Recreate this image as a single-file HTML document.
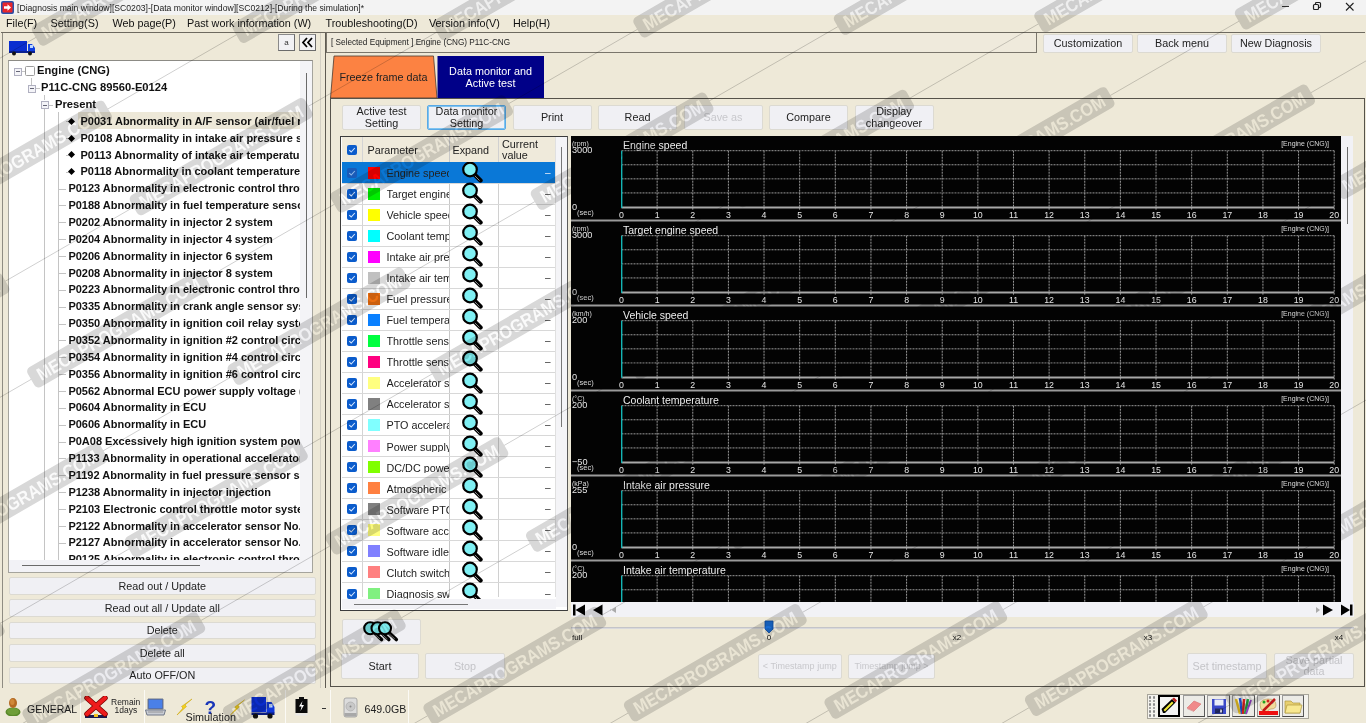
<!DOCTYPE html><html><head><meta charset="utf-8"><style>
html,body{margin:0;padding:0;}
body{width:1366px;height:723px;overflow:hidden;position:relative;background:#eee9d8;font-family:"Liberation Sans", sans-serif;}
.t{position:absolute;white-space:nowrap;}
</style></head><body>
<div style="position:absolute;left:0px;top:0px;width:1366px;height:15px;box-sizing:border-box;background:#f3f3f3"></div>
<svg style="position:absolute;left:1px;top:1px" width="13" height="13" viewBox="0 0 13 13"><rect x="0" y="0" width="13" height="13" rx="2" fill="#2a4fa8"/><rect x="1.5" y="1.5" width="10" height="10" rx="1" fill="#e8262c"/><path d="M3 5.2h3.5V3.3l3.5 3.2-3.5 3.2V7.8H3z" fill="#fff"/></svg>
<div class="t" style="left:17px;top:3.68px;font-size:8.65px;line-height:8.65px;color:#222;font-weight:normal;">[Diagnosis main window][SC0203]-[Data monitor window][SC0212]-[During the simulation]*</div>
<div style="position:absolute;left:1281.5px;top:5.5px;width:7px;height:1px;box-sizing:border-box;background:#333"></div>
<svg style="position:absolute;left:1312px;top:1px" width="10" height="10" viewBox="0 0 10 10"><rect x="1.5" y="3.5" width="5" height="5" rx="1" fill="none" stroke="#222" stroke-width="1.2"/><path d="M3.5 3.5V2.5a1 1 0 0 1 1-1h3a1 1 0 0 1 1 1v3a1 1 0 0 1-1 1h-1" fill="none" stroke="#222" stroke-width="1.2"/></svg>
<svg style="position:absolute;left:1345px;top:1.5px" width="10" height="10" viewBox="0 0 10 10"><path d="M1 1L8.5 8.5M8.5 1L1 8.5" stroke="#222" stroke-width="1.1"/></svg>
<div class="t" style="left:6px;top:18.36px;font-size:10.8px;line-height:10.8px;color:#111;font-weight:normal;">File(F)</div>
<div class="t" style="left:50.5px;top:18.36px;font-size:10.8px;line-height:10.8px;color:#111;font-weight:normal;">Setting(S)</div>
<div class="t" style="left:112.5px;top:18.36px;font-size:10.8px;line-height:10.8px;color:#111;font-weight:normal;">Web page(P)</div>
<div class="t" style="left:187px;top:18.36px;font-size:10.8px;line-height:10.8px;color:#111;font-weight:normal;">Past work information (W)</div>
<div class="t" style="left:325.5px;top:18.36px;font-size:10.8px;line-height:10.8px;color:#111;font-weight:normal;">Troubleshooting(D)</div>
<div class="t" style="left:429px;top:18.36px;font-size:10.8px;line-height:10.8px;color:#111;font-weight:normal;">Version info(V)</div>
<div class="t" style="left:513px;top:18.36px;font-size:10.8px;line-height:10.8px;color:#111;font-weight:normal;">Help(H)</div>
<div style="position:absolute;left:1px;top:32px;width:1364px;height:1px;box-sizing:border-box;background:#6e6a60"></div>
<div style="position:absolute;left:320px;top:33px;width:1px;height:655px;box-sizing:border-box;background:#d4d0c4"></div>
<div style="position:absolute;left:1.5px;top:33px;width:1px;height:655px;box-sizing:border-box;background:#8f8c82"></div>
<svg style="position:absolute;left:9px;top:40px" width="27" height="16" viewBox="0 0 27 16"><rect x="0" y="1" width="18" height="11" fill="#0a2ed0"/><path d="M19 4h4l3 4v4h-7z" fill="#1040e0"/><rect x="21" y="5" width="3" height="3" fill="#bfd8ff"/><rect x="0" y="11" width="26" height="2" fill="#0a2090"/><circle cx="5" cy="13.5" r="2" fill="#111"/><circle cx="21" cy="13.5" r="2" fill="#111"/></svg>
<div style="position:absolute;left:278px;top:34px;width:17px;height:17px;box-sizing:border-box;background:#f2f2f4;border:1px solid #6b6b6b;border-top-color:#8a8a8a;border-left-color:#8a8a8a"></div>
<div class="t" style="left:278.0px;width:17px;text-align:center;top:39.23px;font-size:8px;line-height:8px;color:#333;font-weight:normal;">a</div>
<div style="position:absolute;left:299px;top:34px;width:17px;height:17px;box-sizing:border-box;background:#f2f2f4;border:1px solid #6b6b6b;border-top-color:#8a8a8a;border-left-color:#8a8a8a"></div>
<svg style="position:absolute;left:301px;top:36px" width="13" height="13" viewBox="0 0 13 13"><path d="M6 2L2 6.5L6 11M11 2L7 6.5L11 11" fill="none" stroke="#000" stroke-width="1.8"/></svg>
<div style="position:absolute;left:8px;top:60px;width:305px;height:513px;box-sizing:border-box;background:#fff;border:1px solid #a5a49d;border-top-color:#8c8b85"></div>
<div style="position:absolute;left:300px;top:61px;width:12px;height:511px;box-sizing:border-box;background:#f4f4f7"></div>
<div style="position:absolute;left:305.5px;top:73px;width:1.2px;height:225px;box-sizing:border-box;background:#6a6a6a"></div>
<div style="position:absolute;left:9px;top:560px;width:291px;height:12px;box-sizing:border-box;background:#f2f2f6"></div>
<div style="position:absolute;left:22px;top:564.8px;width:178px;height:1.2px;box-sizing:border-box;background:#6a6a6a"></div>
<div style="position:absolute;left:9px;top:61px;width:291px;height:499px;overflow:hidden">
<div style="position:absolute;left:69px;top:51px;width:230px;height:17px;box-sizing:border-box;background:#ede8d8"></div>
<div style="position:absolute;left:22px;top:17px;width:1px;height:7px;box-sizing:border-box;background:#c4c4c4;width:1px"></div>
<div style="position:absolute;left:35px;top:34px;width:1px;height:5px;box-sizing:border-box;background:#c4c4c4;width:1px"></div>
<div style="position:absolute;left:35px;top:48px;width:1px;height:470px;box-sizing:border-box;background:#c4c4c4;width:1px"></div>
<div style="position:absolute;left:49px;top:51px;width:1px;height:470px;box-sizing:border-box;background:#c4c4c4;width:1px"></div>
<div style="position:absolute;left:12px;top:10px;width:4px;height:1px;box-sizing:border-box;background:#c4c4c4;height:1px"></div>
<div style="position:absolute;left:26px;top:27px;width:5px;height:1px;box-sizing:border-box;background:#c4c4c4;height:1px"></div>
<div style="position:absolute;left:39px;top:43.5px;width:5px;height:1px;box-sizing:border-box;background:#c4c4c4;height:1px"></div>
<div style="position:absolute;left:5px;top:6.5px;width:8px;height:8px;box-sizing:border-box;background:#f4f4f8;border:1px solid #b0b0c0"></div>
<div style="position:absolute;left:7px;top:10px;width:4px;height:1px;box-sizing:border-box;background:#667"></div>
<div style="position:absolute;left:16px;top:5px;width:10px;height:10px;box-sizing:border-box;background:#fff;border:1px solid #9c9c9c;border-radius:1.5px"></div>
<div class="t" style="left:28px;top:4.12px;font-size:11.2px;line-height:11.2px;color:#111;font-weight:bold;">Engine (CNG)</div>
<div style="position:absolute;left:19px;top:23.5px;width:8px;height:8px;box-sizing:border-box;background:#f4f4f8;border:1px solid #b0b0c0"></div>
<div style="position:absolute;left:21px;top:27px;width:4px;height:1px;box-sizing:border-box;background:#667"></div>
<div class="t" style="left:32px;top:20.98px;font-size:11.2px;line-height:11.2px;color:#111;font-weight:bold;">P11C-CNG 89560-E0124</div>
<div style="position:absolute;left:32px;top:40.2px;width:8px;height:8px;box-sizing:border-box;background:#f4f4f8;border:1px solid #b0b0c0"></div>
<div style="position:absolute;left:34px;top:43.7px;width:4px;height:1px;box-sizing:border-box;background:#667"></div>
<div class="t" style="left:46px;top:37.84px;font-size:11.2px;line-height:11.2px;color:#111;font-weight:bold;">Present</div>
<div style="position:absolute;left:57px;top:60.17999999999999px;width:3px;height:1px;box-sizing:border-box;background:#c4c4c4;height:1px"></div>
<svg style="position:absolute;left:59px;top:56.68px" width="7" height="7" viewBox="0 0 7 7"><path d="M3.5 0L7 3.5L3.5 7L0 3.5z" fill="#000"/></svg>
<div class="t" style="left:71.5px;top:54.87px;font-size:11px;line-height:11px;color:#111;font-weight:bold;">P0031 Abnormality in A/F sensor (air/fuel ratio)</div>
<div style="position:absolute;left:57px;top:77.03999999999999px;width:3px;height:1px;box-sizing:border-box;background:#c4c4c4;height:1px"></div>
<svg style="position:absolute;left:59px;top:73.54px" width="7" height="7" viewBox="0 0 7 7"><path d="M3.5 0L7 3.5L3.5 7L0 3.5z" fill="#000"/></svg>
<div class="t" style="left:71.5px;top:71.73px;font-size:11px;line-height:11px;color:#111;font-weight:bold;">P0108 Abnormality in intake air pressure sensor</div>
<div style="position:absolute;left:57px;top:93.89999999999998px;width:3px;height:1px;box-sizing:border-box;background:#c4c4c4;height:1px"></div>
<svg style="position:absolute;left:59px;top:90.40px" width="7" height="7" viewBox="0 0 7 7"><path d="M3.5 0L7 3.5L3.5 7L0 3.5z" fill="#000"/></svg>
<div class="t" style="left:71.5px;top:88.59px;font-size:11px;line-height:11px;color:#111;font-weight:bold;">P0113 Abnormality of intake air temperature</div>
<div style="position:absolute;left:57px;top:110.75999999999999px;width:3px;height:1px;box-sizing:border-box;background:#c4c4c4;height:1px"></div>
<svg style="position:absolute;left:59px;top:107.26px" width="7" height="7" viewBox="0 0 7 7"><path d="M3.5 0L7 3.5L3.5 7L0 3.5z" fill="#000"/></svg>
<div class="t" style="left:71.5px;top:105.45px;font-size:11px;line-height:11px;color:#111;font-weight:bold;">P0118 Abnormality in coolant temperature</div>
<div style="position:absolute;left:50px;top:127.62px;width:7px;height:1px;box-sizing:border-box;background:#c4c4c4;height:1px"></div>
<div class="t" style="left:59.400000000000006px;top:122.31px;font-size:11px;line-height:11px;color:#111;font-weight:bold;">P0123 Abnormality in electronic control throttle</div>
<div style="position:absolute;left:50px;top:144.48px;width:7px;height:1px;box-sizing:border-box;background:#c4c4c4;height:1px"></div>
<div class="t" style="left:59.400000000000006px;top:139.17px;font-size:11px;line-height:11px;color:#111;font-weight:bold;">P0188 Abnormality in fuel temperature sensor</div>
<div style="position:absolute;left:50px;top:161.34px;width:7px;height:1px;box-sizing:border-box;background:#c4c4c4;height:1px"></div>
<div class="t" style="left:59.400000000000006px;top:156.03px;font-size:11px;line-height:11px;color:#111;font-weight:bold;">P0202 Abnormality in injector 2 system</div>
<div style="position:absolute;left:50px;top:178.2px;width:7px;height:1px;box-sizing:border-box;background:#c4c4c4;height:1px"></div>
<div class="t" style="left:59.400000000000006px;top:172.89px;font-size:11px;line-height:11px;color:#111;font-weight:bold;">P0204 Abnormality in injector 4 system</div>
<div style="position:absolute;left:50px;top:195.05999999999995px;width:7px;height:1px;box-sizing:border-box;background:#c4c4c4;height:1px"></div>
<div class="t" style="left:59.400000000000006px;top:189.75px;font-size:11px;line-height:11px;color:#111;font-weight:bold;">P0206 Abnormality in injector 6 system</div>
<div style="position:absolute;left:50px;top:211.91999999999996px;width:7px;height:1px;box-sizing:border-box;background:#c4c4c4;height:1px"></div>
<div class="t" style="left:59.400000000000006px;top:206.61px;font-size:11px;line-height:11px;color:#111;font-weight:bold;">P0208 Abnormality in injector 8 system</div>
<div style="position:absolute;left:50px;top:228.77999999999997px;width:7px;height:1px;box-sizing:border-box;background:#c4c4c4;height:1px"></div>
<div class="t" style="left:59.400000000000006px;top:223.47px;font-size:11px;line-height:11px;color:#111;font-weight:bold;">P0223 Abnormality in electronic control throttle</div>
<div style="position:absolute;left:50px;top:245.64px;width:7px;height:1px;box-sizing:border-box;background:#c4c4c4;height:1px"></div>
<div class="t" style="left:59.400000000000006px;top:240.33px;font-size:11px;line-height:11px;color:#111;font-weight:bold;">P0335 Abnormality in crank angle sensor system</div>
<div style="position:absolute;left:50px;top:262.5px;width:7px;height:1px;box-sizing:border-box;background:#c4c4c4;height:1px"></div>
<div class="t" style="left:59.400000000000006px;top:257.19px;font-size:11px;line-height:11px;color:#111;font-weight:bold;">P0350 Abnormality in ignition coil relay system</div>
<div style="position:absolute;left:50px;top:279.36px;width:7px;height:1px;box-sizing:border-box;background:#c4c4c4;height:1px"></div>
<div class="t" style="left:59.400000000000006px;top:274.05px;font-size:11px;line-height:11px;color:#111;font-weight:bold;">P0352 Abnormality in ignition #2 control circuit</div>
<div style="position:absolute;left:50px;top:296.22px;width:7px;height:1px;box-sizing:border-box;background:#c4c4c4;height:1px"></div>
<div class="t" style="left:59.400000000000006px;top:290.91px;font-size:11px;line-height:11px;color:#111;font-weight:bold;">P0354 Abnormality in ignition #4 control circuit</div>
<div style="position:absolute;left:50px;top:313.08000000000004px;width:7px;height:1px;box-sizing:border-box;background:#c4c4c4;height:1px"></div>
<div class="t" style="left:59.400000000000006px;top:307.77px;font-size:11px;line-height:11px;color:#111;font-weight:bold;">P0356 Abnormality in ignition #6 control circuit</div>
<div style="position:absolute;left:50px;top:329.93999999999994px;width:7px;height:1px;box-sizing:border-box;background:#c4c4c4;height:1px"></div>
<div class="t" style="left:59.400000000000006px;top:324.63px;font-size:11px;line-height:11px;color:#111;font-weight:bold;">P0562 Abnormal ECU power supply voltage (low)</div>
<div style="position:absolute;left:50px;top:346.79999999999995px;width:7px;height:1px;box-sizing:border-box;background:#c4c4c4;height:1px"></div>
<div class="t" style="left:59.400000000000006px;top:341.49px;font-size:11px;line-height:11px;color:#111;font-weight:bold;">P0604 Abnormality in ECU</div>
<div style="position:absolute;left:50px;top:363.65999999999997px;width:7px;height:1px;box-sizing:border-box;background:#c4c4c4;height:1px"></div>
<div class="t" style="left:59.400000000000006px;top:358.35px;font-size:11px;line-height:11px;color:#111;font-weight:bold;">P0606 Abnormality in ECU</div>
<div style="position:absolute;left:50px;top:380.52px;width:7px;height:1px;box-sizing:border-box;background:#c4c4c4;height:1px"></div>
<div class="t" style="left:59.400000000000006px;top:375.21px;font-size:11px;line-height:11px;color:#111;font-weight:bold;">P0A08 Excessively high ignition system power</div>
<div style="position:absolute;left:50px;top:397.38px;width:7px;height:1px;box-sizing:border-box;background:#c4c4c4;height:1px"></div>
<div class="t" style="left:59.400000000000006px;top:392.07px;font-size:11px;line-height:11px;color:#111;font-weight:bold;">P1133 Abnormality in operational accelerator</div>
<div style="position:absolute;left:50px;top:414.24px;width:7px;height:1px;box-sizing:border-box;background:#c4c4c4;height:1px"></div>
<div class="t" style="left:59.400000000000006px;top:408.93px;font-size:11px;line-height:11px;color:#111;font-weight:bold;">P1192 Abnormality in fuel pressure sensor system</div>
<div style="position:absolute;left:50px;top:431.1px;width:7px;height:1px;box-sizing:border-box;background:#c4c4c4;height:1px"></div>
<div class="t" style="left:59.400000000000006px;top:425.79px;font-size:11px;line-height:11px;color:#111;font-weight:bold;">P1238 Abnormality in injector injection</div>
<div style="position:absolute;left:50px;top:447.96000000000004px;width:7px;height:1px;box-sizing:border-box;background:#c4c4c4;height:1px"></div>
<div class="t" style="left:59.400000000000006px;top:442.65px;font-size:11px;line-height:11px;color:#111;font-weight:bold;">P2103 Electronic control throttle motor system</div>
<div style="position:absolute;left:50px;top:464.81999999999994px;width:7px;height:1px;box-sizing:border-box;background:#c4c4c4;height:1px"></div>
<div class="t" style="left:59.400000000000006px;top:459.51px;font-size:11px;line-height:11px;color:#111;font-weight:bold;">P2122 Abnormality in accelerator sensor No.1</div>
<div style="position:absolute;left:50px;top:481.67999999999995px;width:7px;height:1px;box-sizing:border-box;background:#c4c4c4;height:1px"></div>
<div class="t" style="left:59.400000000000006px;top:476.37px;font-size:11px;line-height:11px;color:#111;font-weight:bold;">P2127 Abnormality in accelerator sensor No.2</div>
<div style="position:absolute;left:50px;top:498.53999999999996px;width:7px;height:1px;box-sizing:border-box;background:#c4c4c4;height:1px"></div>
<div class="t" style="left:59.400000000000006px;top:493.23px;font-size:11px;line-height:11px;color:#111;font-weight:bold;">P0125 Abnormality in electronic control throttle</div>
</div>
<div style="position:absolute;left:9px;top:560px;width:291px;height:12px;box-sizing:border-box;background:#f2f2f6"></div>
<div style="position:absolute;left:22px;top:564.8px;width:178px;height:1.2px;box-sizing:border-box;background:#6a6a6a"></div>
<div style="position:absolute;left:300px;top:61px;width:12px;height:511px;box-sizing:border-box;background:#f4f4f7"></div>
<div style="position:absolute;left:305.5px;top:73px;width:1.2px;height:225px;box-sizing:border-box;background:#6a6a6a"></div>
<div style="position:absolute;left:8.5px;top:577.0px;width:307.5px;height:17.5px;box-sizing:border-box;background:#f0f0f4;border:1px solid #dcdad2;border-radius:2px;"></div>
<div class="t" style="left:-11.5px;width:347.5px;text-align:center;top:580.55px;font-size:10.8px;line-height:10.8px;color:#222;font-weight:normal;">Read out / Update</div>
<div style="position:absolute;left:8.5px;top:599.45px;width:307.5px;height:17.5px;box-sizing:border-box;background:#f0f0f4;border:1px solid #dcdad2;border-radius:2px;"></div>
<div class="t" style="left:-11.5px;width:347.5px;text-align:center;top:603.00px;font-size:10.8px;line-height:10.8px;color:#222;font-weight:normal;">Read out all / Update all</div>
<div style="position:absolute;left:8.5px;top:621.9px;width:307.5px;height:17.5px;box-sizing:border-box;background:#f0f0f4;border:1px solid #dcdad2;border-radius:2px;"></div>
<div class="t" style="left:-11.5px;width:347.5px;text-align:center;top:625.45px;font-size:10.8px;line-height:10.8px;color:#222;font-weight:normal;">Delete</div>
<div style="position:absolute;left:8.5px;top:644.35px;width:307.5px;height:17.5px;box-sizing:border-box;background:#f0f0f4;border:1px solid #dcdad2;border-radius:2px;"></div>
<div class="t" style="left:-11.5px;width:347.5px;text-align:center;top:647.90px;font-size:10.8px;line-height:10.8px;color:#222;font-weight:normal;">Delete all</div>
<div style="position:absolute;left:8.5px;top:666.8px;width:307.5px;height:17.5px;box-sizing:border-box;background:#f0f0f4;border:1px solid #dcdad2;border-radius:2px;"></div>
<div class="t" style="left:-11.5px;width:347.5px;text-align:center;top:670.35px;font-size:10.8px;line-height:10.8px;color:#222;font-weight:normal;">Auto OFF/ON</div>
<div style="position:absolute;left:324.5px;top:33px;width:1px;height:655px;box-sizing:border-box;background:#5f5b52"></div>
<div style="position:absolute;left:326px;top:33px;width:711px;height:19.5px;box-sizing:border-box;border:1px solid #7a766c;border-top:none;border-left-color:#7a766c;background:#efeadc"></div>
<div class="t" style="left:331px;top:38.56px;font-size:8.2px;line-height:8.2px;color:#222;font-weight:normal;">[ Selected Equipment ] Engine (CNG) P11C-CNG</div>
<div style="position:absolute;left:1043px;top:33.5px;width:90px;height:19px;box-sizing:border-box;background:#f0f0f4;border:1px solid #dcdad2;border-radius:2px;"></div>
<div class="t" style="left:1023.0px;width:130px;text-align:center;top:37.80px;font-size:10.8px;line-height:10.8px;color:#222;font-weight:normal;">Customization</div>
<div style="position:absolute;left:1137px;top:33.5px;width:90px;height:19px;box-sizing:border-box;background:#f0f0f4;border:1px solid #dcdad2;border-radius:2px;"></div>
<div class="t" style="left:1117.0px;width:130px;text-align:center;top:37.80px;font-size:10.8px;line-height:10.8px;color:#222;font-weight:normal;">Back menu</div>
<div style="position:absolute;left:1231px;top:33.5px;width:90px;height:19px;box-sizing:border-box;background:#f0f0f4;border:1px solid #dcdad2;border-radius:2px;"></div>
<div class="t" style="left:1211.0px;width:130px;text-align:center;top:37.80px;font-size:10.8px;line-height:10.8px;color:#222;font-weight:normal;">New Diagnosis</div>
<svg style="position:absolute;left:330px;top:55px" width="215" height="44" viewBox="0 0 215 44"><path d="M4 1H103.5L107 43H0.5z" fill="#fc8242" stroke="#4a3a30" stroke-width="0.8"/><rect x="107.5" y="1" width="106.5" height="42" fill="#000088"/></svg>
<div class="t" style="left:323.5px;width:120px;text-align:center;top:71.66px;font-size:10.8px;line-height:10.8px;color:#222;font-weight:normal;">Freeze frame data</div>
<div class="t" style="left:430.5px;width:120px;text-align:center;top:66.16px;font-size:10.8px;line-height:10.8px;color:#fff;font-weight:normal;">Data monitor and</div>
<div class="t" style="left:430.5px;width:120px;text-align:center;top:78.36px;font-size:10.8px;line-height:10.8px;color:#fff;font-weight:normal;">Active test</div>
<div style="position:absolute;left:330px;top:98px;width:1034.5px;height:588.5px;box-sizing:border-box;border:1.5px solid #55524a;border-right-width:1.5px"></div>
<div style="position:absolute;left:342px;top:104.5px;width:79px;height:25.5px;box-sizing:border-box;background:#f0f0f4;border:1px solid #dcdad2;border-radius:2px;"></div>
<div class="t" style="left:322.0px;width:119px;text-align:center;top:106.38px;font-size:10.8px;line-height:10.8px;color:#222;font-weight:normal;">Active test</div>
<div class="t" style="left:322.0px;width:119px;text-align:center;top:117.72px;font-size:10.8px;line-height:10.8px;color:#222;font-weight:normal;">Setting</div>
<div style="position:absolute;left:427px;top:104.5px;width:79px;height:25.5px;box-sizing:border-box;background:#f0f0f4;border:1px solid #5aa9e6;border-radius:2px;box-shadow:inset 0 0 0 1px #7fc4f0;"></div>
<div class="t" style="left:407.0px;width:119px;text-align:center;top:106.38px;font-size:10.8px;line-height:10.8px;color:#222;font-weight:normal;">Data monitor</div>
<div class="t" style="left:407.0px;width:119px;text-align:center;top:117.72px;font-size:10.8px;line-height:10.8px;color:#222;font-weight:normal;">Setting</div>
<div style="position:absolute;left:512.5px;top:104.5px;width:79px;height:25.5px;box-sizing:border-box;background:#f0f0f4;border:1px solid #dcdad2;border-radius:2px;"></div>
<div class="t" style="left:492.5px;width:119px;text-align:center;top:112.05px;font-size:10.8px;line-height:10.8px;color:#222;font-weight:normal;">Print</div>
<div style="position:absolute;left:598px;top:104.5px;width:79px;height:25.5px;box-sizing:border-box;background:#f0f0f4;border:1px solid #dcdad2;border-radius:2px;"></div>
<div class="t" style="left:578.0px;width:119px;text-align:center;top:112.05px;font-size:10.8px;line-height:10.8px;color:#222;font-weight:normal;">Read</div>
<div style="position:absolute;left:683.5px;top:104.5px;width:79px;height:25.5px;box-sizing:border-box;background:#f0f0f4;border:1px solid #dcdad2;border-radius:2px;"></div>
<div class="t" style="left:663.5px;width:119px;text-align:center;top:112.05px;font-size:10.8px;line-height:10.8px;color:#c8c8cc;font-weight:normal;">Save as</div>
<div style="position:absolute;left:769px;top:104.5px;width:79px;height:25.5px;box-sizing:border-box;background:#f0f0f4;border:1px solid #dcdad2;border-radius:2px;"></div>
<div class="t" style="left:749.0px;width:119px;text-align:center;top:112.05px;font-size:10.8px;line-height:10.8px;color:#222;font-weight:normal;">Compare</div>
<div style="position:absolute;left:854.5px;top:104.5px;width:79px;height:25.5px;box-sizing:border-box;background:#f0f0f4;border:1px solid #dcdad2;border-radius:2px;"></div>
<div class="t" style="left:834.5px;width:119px;text-align:center;top:106.38px;font-size:10.8px;line-height:10.8px;color:#222;font-weight:normal;">Display</div>
<div class="t" style="left:834.5px;width:119px;text-align:center;top:117.72px;font-size:10.8px;line-height:10.8px;color:#222;font-weight:normal;">changeover</div>
<div style="position:absolute;left:340px;top:135.5px;width:227.5px;height:475px;box-sizing:border-box;background:#fff;border:1.5px solid #3c3c3c;border-right:1px solid #5a5a5a"></div>
<div style="position:absolute;left:341.5px;top:137px;width:213px;height:25px;box-sizing:border-box;background:#efeadb"></div>
<div style="position:absolute;left:362px;top:137px;width:1px;height:460px;box-sizing:border-box;background:#d4d4d4"></div>
<div style="position:absolute;left:448.5px;top:137px;width:1px;height:460px;box-sizing:border-box;background:#c8c8c8"></div>
<div style="position:absolute;left:497.5px;top:137px;width:1px;height:460px;box-sizing:border-box;background:#d0d0d0"></div>
<div style="position:absolute;left:554.5px;top:137px;width:1px;height:460px;box-sizing:border-box;background:#e0e0e0"></div>
<svg style="position:absolute;left:347px;top:144.5px" width="10" height="10" viewBox="0 0 10 10"><rect x="0" y="0" width="10" height="10" rx="2" fill="#0b5ccc"/><path d="M2.3 5.2L4.2 7L7.8 3" fill="none" stroke="#cfe3ff" stroke-width="1.1"/></svg>
<div class="t" style="left:367.5px;top:144.86px;font-size:10.8px;line-height:10.8px;color:#222;font-weight:normal;">Parameter</div>
<div class="t" style="left:452.5px;top:144.86px;font-size:10.8px;line-height:10.8px;color:#222;font-weight:normal;">Expand</div>
<div class="t" style="left:502px;top:139.36px;font-size:10.8px;line-height:10.8px;color:#222;font-weight:normal;">Current</div>
<div class="t" style="left:502px;top:150.36px;font-size:10.8px;line-height:10.8px;color:#222;font-weight:normal;">value</div>
<div style="position:absolute;left:341.5px;top:162px;width:213px;height:437px;overflow:hidden">
<div style="position:absolute;left:0.0px;top:0.0px;width:213px;height:21px;box-sizing:border-box;background:#0a78d7"></div>
<div style="position:absolute;left:0.0px;top:20.5px;width:213px;height:1px;box-sizing:border-box;background:#d8d8d8"></div>
<svg style="position:absolute;left:5.5px;top:5.50px" width="10" height="10" viewBox="0 0 10 10"><rect x="0" y="0" width="10" height="10" rx="2" fill="#1a5bb8"/><path d="M2.3 5.2L4.2 7L7.8 3" fill="none" stroke="#8fb8e8" stroke-width="1.1"/></svg>
<div style="position:absolute;left:26.5px;top:4.5px;width:12px;height:12px;box-sizing:border-box;background:#ff0000"></div>
<div class="t" style="left:45.0px;top:5.86px;width:62.0px;overflow:hidden;font-size:10.8px;line-height:10.8px;color:#222">Engine speed</div>
<svg style="position:absolute;left:119.5px;top:-1.00px" width="24" height="22" viewBox="0 0 24 22"><path d="M13 13L19.5 19.5" stroke="#000" stroke-width="4.4" stroke-linecap="round"/><path d="M13.5 14.5L18.5 19.5" stroke="#9a9a9a" stroke-width="0.9"/><circle cx="9" cy="8.5" r="6.8" fill="#7ff0f4" stroke="#000" stroke-width="2.2"/></svg>
<div class="t" style="left:203.5px;top:5.54px;font-size:10px;line-height:10px;color:#e8eef8;font-weight:normal;">–</div>
<div style="position:absolute;left:0.0px;top:41.55000000000001px;width:213px;height:1px;box-sizing:border-box;background:#d8d8d8"></div>
<svg style="position:absolute;left:5.5px;top:26.55px" width="10" height="10" viewBox="0 0 10 10"><rect x="0" y="0" width="10" height="10" rx="2" fill="#0b5ccc"/><path d="M2.3 5.2L4.2 7L7.8 3" fill="none" stroke="#d8e8ff" stroke-width="1.1"/></svg>
<div style="position:absolute;left:26.5px;top:25.55000000000001px;width:12px;height:12px;box-sizing:border-box;background:#00ee00"></div>
<div class="t" style="left:45.0px;top:26.91px;width:62.0px;overflow:hidden;font-size:10.8px;line-height:10.8px;color:#222">Target engine speed</div>
<svg style="position:absolute;left:119.5px;top:20.05px" width="24" height="22" viewBox="0 0 24 22"><path d="M13 13L19.5 19.5" stroke="#000" stroke-width="4.4" stroke-linecap="round"/><path d="M13.5 14.5L18.5 19.5" stroke="#9a9a9a" stroke-width="0.9"/><circle cx="9" cy="8.5" r="6.8" fill="#7ff0f4" stroke="#000" stroke-width="2.2"/></svg>
<div class="t" style="left:203.5px;top:26.59px;font-size:10px;line-height:10px;color:#333;font-weight:normal;">–</div>
<div style="position:absolute;left:0.0px;top:62.599999999999994px;width:213px;height:1px;box-sizing:border-box;background:#d8d8d8"></div>
<svg style="position:absolute;left:5.5px;top:47.60px" width="10" height="10" viewBox="0 0 10 10"><rect x="0" y="0" width="10" height="10" rx="2" fill="#0b5ccc"/><path d="M2.3 5.2L4.2 7L7.8 3" fill="none" stroke="#d8e8ff" stroke-width="1.1"/></svg>
<div style="position:absolute;left:26.5px;top:46.599999999999994px;width:12px;height:12px;box-sizing:border-box;background:#ffff00"></div>
<div class="t" style="left:45.0px;top:47.96px;width:62.0px;overflow:hidden;font-size:10.8px;line-height:10.8px;color:#222">Vehicle speed</div>
<svg style="position:absolute;left:119.5px;top:41.10px" width="24" height="22" viewBox="0 0 24 22"><path d="M13 13L19.5 19.5" stroke="#000" stroke-width="4.4" stroke-linecap="round"/><path d="M13.5 14.5L18.5 19.5" stroke="#9a9a9a" stroke-width="0.9"/><circle cx="9" cy="8.5" r="6.8" fill="#7ff0f4" stroke="#000" stroke-width="2.2"/></svg>
<div class="t" style="left:203.5px;top:47.63px;font-size:10px;line-height:10px;color:#333;font-weight:normal;">–</div>
<div style="position:absolute;left:0.0px;top:83.65px;width:213px;height:1px;box-sizing:border-box;background:#d8d8d8"></div>
<svg style="position:absolute;left:5.5px;top:68.65px" width="10" height="10" viewBox="0 0 10 10"><rect x="0" y="0" width="10" height="10" rx="2" fill="#0b5ccc"/><path d="M2.3 5.2L4.2 7L7.8 3" fill="none" stroke="#d8e8ff" stroke-width="1.1"/></svg>
<div style="position:absolute;left:26.5px;top:67.65px;width:12px;height:12px;box-sizing:border-box;background:#00ffff"></div>
<div class="t" style="left:45.0px;top:69.01px;width:62.0px;overflow:hidden;font-size:10.8px;line-height:10.8px;color:#222">Coolant temperature</div>
<svg style="position:absolute;left:119.5px;top:62.15px" width="24" height="22" viewBox="0 0 24 22"><path d="M13 13L19.5 19.5" stroke="#000" stroke-width="4.4" stroke-linecap="round"/><path d="M13.5 14.5L18.5 19.5" stroke="#9a9a9a" stroke-width="0.9"/><circle cx="9" cy="8.5" r="6.8" fill="#7ff0f4" stroke="#000" stroke-width="2.2"/></svg>
<div class="t" style="left:203.5px;top:68.69px;font-size:10px;line-height:10px;color:#333;font-weight:normal;">–</div>
<div style="position:absolute;left:0.0px;top:104.69999999999999px;width:213px;height:1px;box-sizing:border-box;background:#d8d8d8"></div>
<svg style="position:absolute;left:5.5px;top:89.70px" width="10" height="10" viewBox="0 0 10 10"><rect x="0" y="0" width="10" height="10" rx="2" fill="#0b5ccc"/><path d="M2.3 5.2L4.2 7L7.8 3" fill="none" stroke="#d8e8ff" stroke-width="1.1"/></svg>
<div style="position:absolute;left:26.5px;top:88.69999999999999px;width:12px;height:12px;box-sizing:border-box;background:#ff00ff"></div>
<div class="t" style="left:45.0px;top:90.06px;width:62.0px;overflow:hidden;font-size:10.8px;line-height:10.8px;color:#222">Intake air pressure</div>
<svg style="position:absolute;left:119.5px;top:83.20px" width="24" height="22" viewBox="0 0 24 22"><path d="M13 13L19.5 19.5" stroke="#000" stroke-width="4.4" stroke-linecap="round"/><path d="M13.5 14.5L18.5 19.5" stroke="#9a9a9a" stroke-width="0.9"/><circle cx="9" cy="8.5" r="6.8" fill="#7ff0f4" stroke="#000" stroke-width="2.2"/></svg>
<div class="t" style="left:203.5px;top:89.73px;font-size:10px;line-height:10px;color:#333;font-weight:normal;">–</div>
<div style="position:absolute;left:0.0px;top:125.75px;width:213px;height:1px;box-sizing:border-box;background:#d8d8d8"></div>
<svg style="position:absolute;left:5.5px;top:110.75px" width="10" height="10" viewBox="0 0 10 10"><rect x="0" y="0" width="10" height="10" rx="2" fill="#0b5ccc"/><path d="M2.3 5.2L4.2 7L7.8 3" fill="none" stroke="#d8e8ff" stroke-width="1.1"/></svg>
<div style="position:absolute;left:26.5px;top:109.75px;width:12px;height:12px;box-sizing:border-box;background:#c0c0c0"></div>
<div class="t" style="left:45.0px;top:111.11px;width:62.0px;overflow:hidden;font-size:10.8px;line-height:10.8px;color:#222">Intake air temperature</div>
<svg style="position:absolute;left:119.5px;top:104.25px" width="24" height="22" viewBox="0 0 24 22"><path d="M13 13L19.5 19.5" stroke="#000" stroke-width="4.4" stroke-linecap="round"/><path d="M13.5 14.5L18.5 19.5" stroke="#9a9a9a" stroke-width="0.9"/><circle cx="9" cy="8.5" r="6.8" fill="#7ff0f4" stroke="#000" stroke-width="2.2"/></svg>
<div class="t" style="left:203.5px;top:110.78px;font-size:10px;line-height:10px;color:#333;font-weight:normal;">–</div>
<div style="position:absolute;left:0.0px;top:146.8px;width:213px;height:1px;box-sizing:border-box;background:#d8d8d8"></div>
<svg style="position:absolute;left:5.5px;top:131.80px" width="10" height="10" viewBox="0 0 10 10"><rect x="0" y="0" width="10" height="10" rx="2" fill="#0b5ccc"/><path d="M2.3 5.2L4.2 7L7.8 3" fill="none" stroke="#d8e8ff" stroke-width="1.1"/></svg>
<div style="position:absolute;left:26.5px;top:130.8px;width:12px;height:12px;box-sizing:border-box;background:#f07010"></div>
<div class="t" style="left:45.0px;top:132.16px;width:62.0px;overflow:hidden;font-size:10.8px;line-height:10.8px;color:#222">Fuel pressure</div>
<svg style="position:absolute;left:119.5px;top:125.30px" width="24" height="22" viewBox="0 0 24 22"><path d="M13 13L19.5 19.5" stroke="#000" stroke-width="4.4" stroke-linecap="round"/><path d="M13.5 14.5L18.5 19.5" stroke="#9a9a9a" stroke-width="0.9"/><circle cx="9" cy="8.5" r="6.8" fill="#7ff0f4" stroke="#000" stroke-width="2.2"/></svg>
<div class="t" style="left:203.5px;top:131.84px;font-size:10px;line-height:10px;color:#333;font-weight:normal;">–</div>
<div style="position:absolute;left:0.0px;top:167.85000000000002px;width:213px;height:1px;box-sizing:border-box;background:#d8d8d8"></div>
<svg style="position:absolute;left:5.5px;top:152.85px" width="10" height="10" viewBox="0 0 10 10"><rect x="0" y="0" width="10" height="10" rx="2" fill="#0b5ccc"/><path d="M2.3 5.2L4.2 7L7.8 3" fill="none" stroke="#d8e8ff" stroke-width="1.1"/></svg>
<div style="position:absolute;left:26.5px;top:151.85000000000002px;width:12px;height:12px;box-sizing:border-box;background:#0a80ff"></div>
<div class="t" style="left:45.0px;top:153.21px;width:62.0px;overflow:hidden;font-size:10.8px;line-height:10.8px;color:#222">Fuel temperature</div>
<svg style="position:absolute;left:119.5px;top:146.35px" width="24" height="22" viewBox="0 0 24 22"><path d="M13 13L19.5 19.5" stroke="#000" stroke-width="4.4" stroke-linecap="round"/><path d="M13.5 14.5L18.5 19.5" stroke="#9a9a9a" stroke-width="0.9"/><circle cx="9" cy="8.5" r="6.8" fill="#7ff0f4" stroke="#000" stroke-width="2.2"/></svg>
<div class="t" style="left:203.5px;top:152.89px;font-size:10px;line-height:10px;color:#333;font-weight:normal;">–</div>
<div style="position:absolute;left:0.0px;top:188.89999999999998px;width:213px;height:1px;box-sizing:border-box;background:#d8d8d8"></div>
<svg style="position:absolute;left:5.5px;top:173.90px" width="10" height="10" viewBox="0 0 10 10"><rect x="0" y="0" width="10" height="10" rx="2" fill="#0b5ccc"/><path d="M2.3 5.2L4.2 7L7.8 3" fill="none" stroke="#d8e8ff" stroke-width="1.1"/></svg>
<div style="position:absolute;left:26.5px;top:172.89999999999998px;width:12px;height:12px;box-sizing:border-box;background:#00ff40"></div>
<div class="t" style="left:45.0px;top:174.26px;width:62.0px;overflow:hidden;font-size:10.8px;line-height:10.8px;color:#222">Throttle sensor</div>
<svg style="position:absolute;left:119.5px;top:167.40px" width="24" height="22" viewBox="0 0 24 22"><path d="M13 13L19.5 19.5" stroke="#000" stroke-width="4.4" stroke-linecap="round"/><path d="M13.5 14.5L18.5 19.5" stroke="#9a9a9a" stroke-width="0.9"/><circle cx="9" cy="8.5" r="6.8" fill="#7ff0f4" stroke="#000" stroke-width="2.2"/></svg>
<div class="t" style="left:203.5px;top:173.93px;font-size:10px;line-height:10px;color:#333;font-weight:normal;">–</div>
<div style="position:absolute;left:0.0px;top:209.95000000000005px;width:213px;height:1px;box-sizing:border-box;background:#d8d8d8"></div>
<svg style="position:absolute;left:5.5px;top:194.95px" width="10" height="10" viewBox="0 0 10 10"><rect x="0" y="0" width="10" height="10" rx="2" fill="#0b5ccc"/><path d="M2.3 5.2L4.2 7L7.8 3" fill="none" stroke="#d8e8ff" stroke-width="1.1"/></svg>
<div style="position:absolute;left:26.5px;top:193.95000000000005px;width:12px;height:12px;box-sizing:border-box;background:#ff0080"></div>
<div class="t" style="left:45.0px;top:195.31px;width:62.0px;overflow:hidden;font-size:10.8px;line-height:10.8px;color:#222">Throttle sensor</div>
<svg style="position:absolute;left:119.5px;top:188.45px" width="24" height="22" viewBox="0 0 24 22"><path d="M13 13L19.5 19.5" stroke="#000" stroke-width="4.4" stroke-linecap="round"/><path d="M13.5 14.5L18.5 19.5" stroke="#9a9a9a" stroke-width="0.9"/><circle cx="9" cy="8.5" r="6.8" fill="#7ff0f4" stroke="#000" stroke-width="2.2"/></svg>
<div class="t" style="left:203.5px;top:194.99px;font-size:10px;line-height:10px;color:#333;font-weight:normal;">–</div>
<div style="position:absolute;left:0.0px;top:231.0px;width:213px;height:1px;box-sizing:border-box;background:#d8d8d8"></div>
<svg style="position:absolute;left:5.5px;top:216.00px" width="10" height="10" viewBox="0 0 10 10"><rect x="0" y="0" width="10" height="10" rx="2" fill="#0b5ccc"/><path d="M2.3 5.2L4.2 7L7.8 3" fill="none" stroke="#d8e8ff" stroke-width="1.1"/></svg>
<div style="position:absolute;left:26.5px;top:215.0px;width:12px;height:12px;box-sizing:border-box;background:#ffff80"></div>
<div class="t" style="left:45.0px;top:216.36px;width:62.0px;overflow:hidden;font-size:10.8px;line-height:10.8px;color:#222">Accelerator sensor</div>
<svg style="position:absolute;left:119.5px;top:209.50px" width="24" height="22" viewBox="0 0 24 22"><path d="M13 13L19.5 19.5" stroke="#000" stroke-width="4.4" stroke-linecap="round"/><path d="M13.5 14.5L18.5 19.5" stroke="#9a9a9a" stroke-width="0.9"/><circle cx="9" cy="8.5" r="6.8" fill="#7ff0f4" stroke="#000" stroke-width="2.2"/></svg>
<div class="t" style="left:203.5px;top:216.03px;font-size:10px;line-height:10px;color:#333;font-weight:normal;">–</div>
<div style="position:absolute;left:0.0px;top:252.05px;width:213px;height:1px;box-sizing:border-box;background:#d8d8d8"></div>
<svg style="position:absolute;left:5.5px;top:237.05px" width="10" height="10" viewBox="0 0 10 10"><rect x="0" y="0" width="10" height="10" rx="2" fill="#0b5ccc"/><path d="M2.3 5.2L4.2 7L7.8 3" fill="none" stroke="#d8e8ff" stroke-width="1.1"/></svg>
<div style="position:absolute;left:26.5px;top:236.05px;width:12px;height:12px;box-sizing:border-box;background:#808080"></div>
<div class="t" style="left:45.0px;top:237.41px;width:62.0px;overflow:hidden;font-size:10.8px;line-height:10.8px;color:#222">Accelerator sensor</div>
<svg style="position:absolute;left:119.5px;top:230.55px" width="24" height="22" viewBox="0 0 24 22"><path d="M13 13L19.5 19.5" stroke="#000" stroke-width="4.4" stroke-linecap="round"/><path d="M13.5 14.5L18.5 19.5" stroke="#9a9a9a" stroke-width="0.9"/><circle cx="9" cy="8.5" r="6.8" fill="#7ff0f4" stroke="#000" stroke-width="2.2"/></svg>
<div class="t" style="left:203.5px;top:237.09px;font-size:10px;line-height:10px;color:#333;font-weight:normal;">–</div>
<div style="position:absolute;left:0.0px;top:273.1px;width:213px;height:1px;box-sizing:border-box;background:#d8d8d8"></div>
<svg style="position:absolute;left:5.5px;top:258.10px" width="10" height="10" viewBox="0 0 10 10"><rect x="0" y="0" width="10" height="10" rx="2" fill="#0b5ccc"/><path d="M2.3 5.2L4.2 7L7.8 3" fill="none" stroke="#d8e8ff" stroke-width="1.1"/></svg>
<div style="position:absolute;left:26.5px;top:257.1px;width:12px;height:12px;box-sizing:border-box;background:#80ffff"></div>
<div class="t" style="left:45.0px;top:258.46px;width:62.0px;overflow:hidden;font-size:10.8px;line-height:10.8px;color:#222">PTO accelerator</div>
<svg style="position:absolute;left:119.5px;top:251.60px" width="24" height="22" viewBox="0 0 24 22"><path d="M13 13L19.5 19.5" stroke="#000" stroke-width="4.4" stroke-linecap="round"/><path d="M13.5 14.5L18.5 19.5" stroke="#9a9a9a" stroke-width="0.9"/><circle cx="9" cy="8.5" r="6.8" fill="#7ff0f4" stroke="#000" stroke-width="2.2"/></svg>
<div class="t" style="left:203.5px;top:258.14px;font-size:10px;line-height:10px;color:#333;font-weight:normal;">–</div>
<div style="position:absolute;left:0.0px;top:294.15000000000003px;width:213px;height:1px;box-sizing:border-box;background:#d8d8d8"></div>
<svg style="position:absolute;left:5.5px;top:279.15px" width="10" height="10" viewBox="0 0 10 10"><rect x="0" y="0" width="10" height="10" rx="2" fill="#0b5ccc"/><path d="M2.3 5.2L4.2 7L7.8 3" fill="none" stroke="#d8e8ff" stroke-width="1.1"/></svg>
<div style="position:absolute;left:26.5px;top:278.15000000000003px;width:12px;height:12px;box-sizing:border-box;background:#ff80ff"></div>
<div class="t" style="left:45.0px;top:279.51px;width:62.0px;overflow:hidden;font-size:10.8px;line-height:10.8px;color:#222">Power supply</div>
<svg style="position:absolute;left:119.5px;top:272.65px" width="24" height="22" viewBox="0 0 24 22"><path d="M13 13L19.5 19.5" stroke="#000" stroke-width="4.4" stroke-linecap="round"/><path d="M13.5 14.5L18.5 19.5" stroke="#9a9a9a" stroke-width="0.9"/><circle cx="9" cy="8.5" r="6.8" fill="#7ff0f4" stroke="#000" stroke-width="2.2"/></svg>
<div class="t" style="left:203.5px;top:279.19px;font-size:10px;line-height:10px;color:#333;font-weight:normal;">–</div>
<div style="position:absolute;left:0.0px;top:315.2px;width:213px;height:1px;box-sizing:border-box;background:#d8d8d8"></div>
<svg style="position:absolute;left:5.5px;top:300.20px" width="10" height="10" viewBox="0 0 10 10"><rect x="0" y="0" width="10" height="10" rx="2" fill="#0b5ccc"/><path d="M2.3 5.2L4.2 7L7.8 3" fill="none" stroke="#d8e8ff" stroke-width="1.1"/></svg>
<div style="position:absolute;left:26.5px;top:299.2px;width:12px;height:12px;box-sizing:border-box;background:#80ff00"></div>
<div class="t" style="left:45.0px;top:300.56px;width:62.0px;overflow:hidden;font-size:10.8px;line-height:10.8px;color:#222">DC/DC power</div>
<svg style="position:absolute;left:119.5px;top:293.70px" width="24" height="22" viewBox="0 0 24 22"><path d="M13 13L19.5 19.5" stroke="#000" stroke-width="4.4" stroke-linecap="round"/><path d="M13.5 14.5L18.5 19.5" stroke="#9a9a9a" stroke-width="0.9"/><circle cx="9" cy="8.5" r="6.8" fill="#7ff0f4" stroke="#000" stroke-width="2.2"/></svg>
<div class="t" style="left:203.5px;top:300.24px;font-size:10px;line-height:10px;color:#333;font-weight:normal;">–</div>
<div style="position:absolute;left:0.0px;top:336.25px;width:213px;height:1px;box-sizing:border-box;background:#d8d8d8"></div>
<svg style="position:absolute;left:5.5px;top:321.25px" width="10" height="10" viewBox="0 0 10 10"><rect x="0" y="0" width="10" height="10" rx="2" fill="#0b5ccc"/><path d="M2.3 5.2L4.2 7L7.8 3" fill="none" stroke="#d8e8ff" stroke-width="1.1"/></svg>
<div style="position:absolute;left:26.5px;top:320.25px;width:12px;height:12px;box-sizing:border-box;background:#ff8040"></div>
<div class="t" style="left:45.0px;top:321.61px;width:62.0px;overflow:hidden;font-size:10.8px;line-height:10.8px;color:#222">Atmospheric</div>
<svg style="position:absolute;left:119.5px;top:314.75px" width="24" height="22" viewBox="0 0 24 22"><path d="M13 13L19.5 19.5" stroke="#000" stroke-width="4.4" stroke-linecap="round"/><path d="M13.5 14.5L18.5 19.5" stroke="#9a9a9a" stroke-width="0.9"/><circle cx="9" cy="8.5" r="6.8" fill="#7ff0f4" stroke="#000" stroke-width="2.2"/></svg>
<div class="t" style="left:203.5px;top:321.29px;font-size:10px;line-height:10px;color:#333;font-weight:normal;">–</div>
<div style="position:absolute;left:0.0px;top:357.29999999999995px;width:213px;height:1px;box-sizing:border-box;background:#d8d8d8"></div>
<svg style="position:absolute;left:5.5px;top:342.30px" width="10" height="10" viewBox="0 0 10 10"><rect x="0" y="0" width="10" height="10" rx="2" fill="#0b5ccc"/><path d="M2.3 5.2L4.2 7L7.8 3" fill="none" stroke="#d8e8ff" stroke-width="1.1"/></svg>
<div style="position:absolute;left:26.5px;top:341.3px;width:12px;height:12px;box-sizing:border-box;background:#808080"></div>
<div class="t" style="left:45.0px;top:342.66px;width:62.0px;overflow:hidden;font-size:10.8px;line-height:10.8px;color:#222">Software PTO</div>
<svg style="position:absolute;left:119.5px;top:335.80px" width="24" height="22" viewBox="0 0 24 22"><path d="M13 13L19.5 19.5" stroke="#000" stroke-width="4.4" stroke-linecap="round"/><path d="M13.5 14.5L18.5 19.5" stroke="#9a9a9a" stroke-width="0.9"/><circle cx="9" cy="8.5" r="6.8" fill="#7ff0f4" stroke="#000" stroke-width="2.2"/></svg>
<div class="t" style="left:203.5px;top:342.33px;font-size:10px;line-height:10px;color:#333;font-weight:normal;">–</div>
<div style="position:absolute;left:0.0px;top:378.35px;width:213px;height:1px;box-sizing:border-box;background:#d8d8d8"></div>
<svg style="position:absolute;left:5.5px;top:363.35px" width="10" height="10" viewBox="0 0 10 10"><rect x="0" y="0" width="10" height="10" rx="2" fill="#0b5ccc"/><path d="M2.3 5.2L4.2 7L7.8 3" fill="none" stroke="#d8e8ff" stroke-width="1.1"/></svg>
<div style="position:absolute;left:26.5px;top:362.35px;width:12px;height:12px;box-sizing:border-box;background:#ffff80"></div>
<div class="t" style="left:45.0px;top:363.71px;width:62.0px;overflow:hidden;font-size:10.8px;line-height:10.8px;color:#222">Software accel</div>
<svg style="position:absolute;left:119.5px;top:356.85px" width="24" height="22" viewBox="0 0 24 22"><path d="M13 13L19.5 19.5" stroke="#000" stroke-width="4.4" stroke-linecap="round"/><path d="M13.5 14.5L18.5 19.5" stroke="#9a9a9a" stroke-width="0.9"/><circle cx="9" cy="8.5" r="6.8" fill="#7ff0f4" stroke="#000" stroke-width="2.2"/></svg>
<div class="t" style="left:203.5px;top:363.39px;font-size:10px;line-height:10px;color:#333;font-weight:normal;">–</div>
<div style="position:absolute;left:0.0px;top:399.4000000000001px;width:213px;height:1px;box-sizing:border-box;background:#d8d8d8"></div>
<svg style="position:absolute;left:5.5px;top:384.40px" width="10" height="10" viewBox="0 0 10 10"><rect x="0" y="0" width="10" height="10" rx="2" fill="#0b5ccc"/><path d="M2.3 5.2L4.2 7L7.8 3" fill="none" stroke="#d8e8ff" stroke-width="1.1"/></svg>
<div style="position:absolute;left:26.5px;top:383.4000000000001px;width:12px;height:12px;box-sizing:border-box;background:#8080ff"></div>
<div class="t" style="left:45.0px;top:384.76px;width:62.0px;overflow:hidden;font-size:10.8px;line-height:10.8px;color:#222">Software idle</div>
<svg style="position:absolute;left:119.5px;top:377.90px" width="24" height="22" viewBox="0 0 24 22"><path d="M13 13L19.5 19.5" stroke="#000" stroke-width="4.4" stroke-linecap="round"/><path d="M13.5 14.5L18.5 19.5" stroke="#9a9a9a" stroke-width="0.9"/><circle cx="9" cy="8.5" r="6.8" fill="#7ff0f4" stroke="#000" stroke-width="2.2"/></svg>
<div class="t" style="left:203.5px;top:384.44px;font-size:10px;line-height:10px;color:#333;font-weight:normal;">–</div>
<div style="position:absolute;left:0.0px;top:420.45000000000005px;width:213px;height:1px;box-sizing:border-box;background:#d8d8d8"></div>
<svg style="position:absolute;left:5.5px;top:405.45px" width="10" height="10" viewBox="0 0 10 10"><rect x="0" y="0" width="10" height="10" rx="2" fill="#0b5ccc"/><path d="M2.3 5.2L4.2 7L7.8 3" fill="none" stroke="#d8e8ff" stroke-width="1.1"/></svg>
<div style="position:absolute;left:26.5px;top:404.45000000000005px;width:12px;height:12px;box-sizing:border-box;background:#ff8080"></div>
<div class="t" style="left:45.0px;top:405.81px;width:62.0px;overflow:hidden;font-size:10.8px;line-height:10.8px;color:#222">Clutch switch</div>
<svg style="position:absolute;left:119.5px;top:398.95px" width="24" height="22" viewBox="0 0 24 22"><path d="M13 13L19.5 19.5" stroke="#000" stroke-width="4.4" stroke-linecap="round"/><path d="M13.5 14.5L18.5 19.5" stroke="#9a9a9a" stroke-width="0.9"/><circle cx="9" cy="8.5" r="6.8" fill="#7ff0f4" stroke="#000" stroke-width="2.2"/></svg>
<div class="t" style="left:203.5px;top:405.49px;font-size:10px;line-height:10px;color:#333;font-weight:normal;">–</div>
<div style="position:absolute;left:0.0px;top:441.5px;width:213px;height:1px;box-sizing:border-box;background:#d8d8d8"></div>
<svg style="position:absolute;left:5.5px;top:426.50px" width="10" height="10" viewBox="0 0 10 10"><rect x="0" y="0" width="10" height="10" rx="2" fill="#0b5ccc"/><path d="M2.3 5.2L4.2 7L7.8 3" fill="none" stroke="#d8e8ff" stroke-width="1.1"/></svg>
<div style="position:absolute;left:26.5px;top:425.5px;width:12px;height:12px;box-sizing:border-box;background:#80f080"></div>
<div class="t" style="left:45.0px;top:426.86px;width:62.0px;overflow:hidden;font-size:10.8px;line-height:10.8px;color:#222">Diagnosis switch</div>
<svg style="position:absolute;left:119.5px;top:420.00px" width="24" height="22" viewBox="0 0 24 22"><path d="M13 13L19.5 19.5" stroke="#000" stroke-width="4.4" stroke-linecap="round"/><path d="M13.5 14.5L18.5 19.5" stroke="#9a9a9a" stroke-width="0.9"/><circle cx="9" cy="8.5" r="6.8" fill="#7ff0f4" stroke="#000" stroke-width="2.2"/></svg>
<div class="t" style="left:203.5px;top:426.54px;font-size:10px;line-height:10px;color:#333;font-weight:normal;">–</div>
</div>
<div style="position:absolute;left:556px;top:137px;width:11px;height:470px;box-sizing:border-box;background:#f4f4f7"></div>
<div style="position:absolute;left:560.5px;top:147px;width:1.2px;height:280px;box-sizing:border-box;background:#777"></div>
<div style="position:absolute;left:341.5px;top:599px;width:214px;height:10px;box-sizing:border-box;background:#f2f2f6"></div>
<div style="position:absolute;left:354px;top:603.5px;width:114px;height:1.2px;box-sizing:border-box;background:#777"></div>
<svg style="position:absolute;left:571px;top:136px" width="770" height="466" viewBox="571 136 770 466" font-family="Liberation Sans, sans-serif"><rect x="571" y="136" width="770" height="466" fill="#030303"/><line x1="621.5" y1="150.70" x2="1334.2" y2="150.70" stroke="#9a9a9a" stroke-width="1" stroke-dasharray="2 1"/><line x1="621.5" y1="164.77" x2="1334.2" y2="164.77" stroke="#9a9a9a" stroke-width="1" stroke-dasharray="2 1"/><line x1="621.5" y1="178.85" x2="1334.2" y2="178.85" stroke="#9a9a9a" stroke-width="1" stroke-dasharray="2 1"/><line x1="621.5" y1="192.93" x2="1334.2" y2="192.93" stroke="#9a9a9a" stroke-width="1" stroke-dasharray="2 1"/><line x1="657.13" y1="150.7" x2="657.13" y2="210" stroke="#9a9a9a" stroke-width="1" stroke-dasharray="2 1"/><line x1="692.77" y1="150.7" x2="692.77" y2="210" stroke="#9a9a9a" stroke-width="1" stroke-dasharray="2 1"/><line x1="728.40" y1="150.7" x2="728.40" y2="210" stroke="#9a9a9a" stroke-width="1" stroke-dasharray="2 1"/><line x1="764.04" y1="150.7" x2="764.04" y2="210" stroke="#9a9a9a" stroke-width="1" stroke-dasharray="2 1"/><line x1="799.67" y1="150.7" x2="799.67" y2="210" stroke="#9a9a9a" stroke-width="1" stroke-dasharray="2 1"/><line x1="835.31" y1="150.7" x2="835.31" y2="210" stroke="#9a9a9a" stroke-width="1" stroke-dasharray="2 1"/><line x1="870.95" y1="150.7" x2="870.95" y2="210" stroke="#9a9a9a" stroke-width="1" stroke-dasharray="2 1"/><line x1="906.58" y1="150.7" x2="906.58" y2="210" stroke="#9a9a9a" stroke-width="1" stroke-dasharray="2 1"/><line x1="942.22" y1="150.7" x2="942.22" y2="210" stroke="#9a9a9a" stroke-width="1" stroke-dasharray="2 1"/><line x1="977.85" y1="150.7" x2="977.85" y2="210" stroke="#9a9a9a" stroke-width="1" stroke-dasharray="2 1"/><line x1="1013.49" y1="150.7" x2="1013.49" y2="210" stroke="#9a9a9a" stroke-width="1" stroke-dasharray="2 1"/><line x1="1049.12" y1="150.7" x2="1049.12" y2="210" stroke="#9a9a9a" stroke-width="1" stroke-dasharray="2 1"/><line x1="1084.76" y1="150.7" x2="1084.76" y2="210" stroke="#9a9a9a" stroke-width="1" stroke-dasharray="2 1"/><line x1="1120.39" y1="150.7" x2="1120.39" y2="210" stroke="#9a9a9a" stroke-width="1" stroke-dasharray="2 1"/><line x1="1156.03" y1="150.7" x2="1156.03" y2="210" stroke="#9a9a9a" stroke-width="1" stroke-dasharray="2 1"/><line x1="1191.66" y1="150.7" x2="1191.66" y2="210" stroke="#9a9a9a" stroke-width="1" stroke-dasharray="2 1"/><line x1="1227.30" y1="150.7" x2="1227.30" y2="210" stroke="#9a9a9a" stroke-width="1" stroke-dasharray="2 1"/><line x1="1262.93" y1="150.7" x2="1262.93" y2="210" stroke="#9a9a9a" stroke-width="1" stroke-dasharray="2 1"/><line x1="1298.57" y1="150.7" x2="1298.57" y2="210" stroke="#9a9a9a" stroke-width="1" stroke-dasharray="2 1"/><line x1="1334.20" y1="150.7" x2="1334.20" y2="210" stroke="#9a9a9a" stroke-width="1" stroke-dasharray="2 1"/><rect x="621.5" y="206.5" width="712.7" height="2" fill="#a8a8a8"/><rect x="621.0" y="150.7" width="1.4" height="57.30000000000001" fill="#14b4b4"/><text x="621.50" y="217.8" font-size="8.8" fill="#e6e6e6" text-anchor="middle">0</text><text x="657.13" y="217.8" font-size="8.8" fill="#e6e6e6" text-anchor="middle">1</text><text x="692.77" y="217.8" font-size="8.8" fill="#e6e6e6" text-anchor="middle">2</text><text x="728.40" y="217.8" font-size="8.8" fill="#e6e6e6" text-anchor="middle">3</text><text x="764.04" y="217.8" font-size="8.8" fill="#e6e6e6" text-anchor="middle">4</text><text x="799.67" y="217.8" font-size="8.8" fill="#e6e6e6" text-anchor="middle">5</text><text x="835.31" y="217.8" font-size="8.8" fill="#e6e6e6" text-anchor="middle">6</text><text x="870.95" y="217.8" font-size="8.8" fill="#e6e6e6" text-anchor="middle">7</text><text x="906.58" y="217.8" font-size="8.8" fill="#e6e6e6" text-anchor="middle">8</text><text x="942.22" y="217.8" font-size="8.8" fill="#e6e6e6" text-anchor="middle">9</text><text x="977.85" y="217.8" font-size="8.8" fill="#e6e6e6" text-anchor="middle">10</text><text x="1013.49" y="217.8" font-size="8.8" fill="#e6e6e6" text-anchor="middle">11</text><text x="1049.12" y="217.8" font-size="8.8" fill="#e6e6e6" text-anchor="middle">12</text><text x="1084.76" y="217.8" font-size="8.8" fill="#e6e6e6" text-anchor="middle">13</text><text x="1120.39" y="217.8" font-size="8.8" fill="#e6e6e6" text-anchor="middle">14</text><text x="1156.03" y="217.8" font-size="8.8" fill="#e6e6e6" text-anchor="middle">15</text><text x="1191.66" y="217.8" font-size="8.8" fill="#e6e6e6" text-anchor="middle">16</text><text x="1227.30" y="217.8" font-size="8.8" fill="#e6e6e6" text-anchor="middle">17</text><text x="1262.93" y="217.8" font-size="8.8" fill="#e6e6e6" text-anchor="middle">18</text><text x="1298.57" y="217.8" font-size="8.8" fill="#e6e6e6" text-anchor="middle">19</text><text x="1334.20" y="217.8" font-size="8.8" fill="#e6e6e6" text-anchor="middle">20</text><text x="623" y="148.8" font-size="10.5" fill="#eeeeee">Engine speed</text><text x="572" y="145.5" font-size="7" fill="#dddddd">(rpm)</text><text x="572" y="152.5" font-size="9.2" fill="#e6e6e6">3000</text><text x="572" y="209.5" font-size="9.2" fill="#e6e6e6">0</text><text x="577" y="214.8" font-size="7.5" fill="#dddddd">(sec)</text><text x="1329" y="145.8" font-size="7" fill="#dcdcdc" text-anchor="end">[Engine (CNG)]</text><rect x="571" y="219.5" width="770" height="2" fill="#9a9a9a"/><line x1="621.5" y1="235.70" x2="1334.2" y2="235.70" stroke="#9a9a9a" stroke-width="1" stroke-dasharray="2 1"/><line x1="621.5" y1="249.77" x2="1334.2" y2="249.77" stroke="#9a9a9a" stroke-width="1" stroke-dasharray="2 1"/><line x1="621.5" y1="263.85" x2="1334.2" y2="263.85" stroke="#9a9a9a" stroke-width="1" stroke-dasharray="2 1"/><line x1="621.5" y1="277.93" x2="1334.2" y2="277.93" stroke="#9a9a9a" stroke-width="1" stroke-dasharray="2 1"/><line x1="657.13" y1="235.7" x2="657.13" y2="295" stroke="#9a9a9a" stroke-width="1" stroke-dasharray="2 1"/><line x1="692.77" y1="235.7" x2="692.77" y2="295" stroke="#9a9a9a" stroke-width="1" stroke-dasharray="2 1"/><line x1="728.40" y1="235.7" x2="728.40" y2="295" stroke="#9a9a9a" stroke-width="1" stroke-dasharray="2 1"/><line x1="764.04" y1="235.7" x2="764.04" y2="295" stroke="#9a9a9a" stroke-width="1" stroke-dasharray="2 1"/><line x1="799.67" y1="235.7" x2="799.67" y2="295" stroke="#9a9a9a" stroke-width="1" stroke-dasharray="2 1"/><line x1="835.31" y1="235.7" x2="835.31" y2="295" stroke="#9a9a9a" stroke-width="1" stroke-dasharray="2 1"/><line x1="870.95" y1="235.7" x2="870.95" y2="295" stroke="#9a9a9a" stroke-width="1" stroke-dasharray="2 1"/><line x1="906.58" y1="235.7" x2="906.58" y2="295" stroke="#9a9a9a" stroke-width="1" stroke-dasharray="2 1"/><line x1="942.22" y1="235.7" x2="942.22" y2="295" stroke="#9a9a9a" stroke-width="1" stroke-dasharray="2 1"/><line x1="977.85" y1="235.7" x2="977.85" y2="295" stroke="#9a9a9a" stroke-width="1" stroke-dasharray="2 1"/><line x1="1013.49" y1="235.7" x2="1013.49" y2="295" stroke="#9a9a9a" stroke-width="1" stroke-dasharray="2 1"/><line x1="1049.12" y1="235.7" x2="1049.12" y2="295" stroke="#9a9a9a" stroke-width="1" stroke-dasharray="2 1"/><line x1="1084.76" y1="235.7" x2="1084.76" y2="295" stroke="#9a9a9a" stroke-width="1" stroke-dasharray="2 1"/><line x1="1120.39" y1="235.7" x2="1120.39" y2="295" stroke="#9a9a9a" stroke-width="1" stroke-dasharray="2 1"/><line x1="1156.03" y1="235.7" x2="1156.03" y2="295" stroke="#9a9a9a" stroke-width="1" stroke-dasharray="2 1"/><line x1="1191.66" y1="235.7" x2="1191.66" y2="295" stroke="#9a9a9a" stroke-width="1" stroke-dasharray="2 1"/><line x1="1227.30" y1="235.7" x2="1227.30" y2="295" stroke="#9a9a9a" stroke-width="1" stroke-dasharray="2 1"/><line x1="1262.93" y1="235.7" x2="1262.93" y2="295" stroke="#9a9a9a" stroke-width="1" stroke-dasharray="2 1"/><line x1="1298.57" y1="235.7" x2="1298.57" y2="295" stroke="#9a9a9a" stroke-width="1" stroke-dasharray="2 1"/><line x1="1334.20" y1="235.7" x2="1334.20" y2="295" stroke="#9a9a9a" stroke-width="1" stroke-dasharray="2 1"/><rect x="621.5" y="291.5" width="712.7" height="2" fill="#a8a8a8"/><rect x="621.0" y="235.7" width="1.4" height="57.30000000000001" fill="#14b4b4"/><text x="621.50" y="302.8" font-size="8.8" fill="#e6e6e6" text-anchor="middle">0</text><text x="657.13" y="302.8" font-size="8.8" fill="#e6e6e6" text-anchor="middle">1</text><text x="692.77" y="302.8" font-size="8.8" fill="#e6e6e6" text-anchor="middle">2</text><text x="728.40" y="302.8" font-size="8.8" fill="#e6e6e6" text-anchor="middle">3</text><text x="764.04" y="302.8" font-size="8.8" fill="#e6e6e6" text-anchor="middle">4</text><text x="799.67" y="302.8" font-size="8.8" fill="#e6e6e6" text-anchor="middle">5</text><text x="835.31" y="302.8" font-size="8.8" fill="#e6e6e6" text-anchor="middle">6</text><text x="870.95" y="302.8" font-size="8.8" fill="#e6e6e6" text-anchor="middle">7</text><text x="906.58" y="302.8" font-size="8.8" fill="#e6e6e6" text-anchor="middle">8</text><text x="942.22" y="302.8" font-size="8.8" fill="#e6e6e6" text-anchor="middle">9</text><text x="977.85" y="302.8" font-size="8.8" fill="#e6e6e6" text-anchor="middle">10</text><text x="1013.49" y="302.8" font-size="8.8" fill="#e6e6e6" text-anchor="middle">11</text><text x="1049.12" y="302.8" font-size="8.8" fill="#e6e6e6" text-anchor="middle">12</text><text x="1084.76" y="302.8" font-size="8.8" fill="#e6e6e6" text-anchor="middle">13</text><text x="1120.39" y="302.8" font-size="8.8" fill="#e6e6e6" text-anchor="middle">14</text><text x="1156.03" y="302.8" font-size="8.8" fill="#e6e6e6" text-anchor="middle">15</text><text x="1191.66" y="302.8" font-size="8.8" fill="#e6e6e6" text-anchor="middle">16</text><text x="1227.30" y="302.8" font-size="8.8" fill="#e6e6e6" text-anchor="middle">17</text><text x="1262.93" y="302.8" font-size="8.8" fill="#e6e6e6" text-anchor="middle">18</text><text x="1298.57" y="302.8" font-size="8.8" fill="#e6e6e6" text-anchor="middle">19</text><text x="1334.20" y="302.8" font-size="8.8" fill="#e6e6e6" text-anchor="middle">20</text><text x="623" y="233.8" font-size="10.5" fill="#eeeeee">Target engine speed</text><text x="572" y="230.5" font-size="7" fill="#dddddd">(rpm)</text><text x="572" y="237.5" font-size="9.2" fill="#e6e6e6">3000</text><text x="572" y="294.5" font-size="9.2" fill="#e6e6e6">0</text><text x="577" y="299.8" font-size="7.5" fill="#dddddd">(sec)</text><text x="1329" y="230.8" font-size="7" fill="#dcdcdc" text-anchor="end">[Engine (CNG)]</text><rect x="571" y="304.5" width="770" height="2" fill="#9a9a9a"/><line x1="621.5" y1="320.70" x2="1334.2" y2="320.70" stroke="#9a9a9a" stroke-width="1" stroke-dasharray="2 1"/><line x1="621.5" y1="334.77" x2="1334.2" y2="334.77" stroke="#9a9a9a" stroke-width="1" stroke-dasharray="2 1"/><line x1="621.5" y1="348.85" x2="1334.2" y2="348.85" stroke="#9a9a9a" stroke-width="1" stroke-dasharray="2 1"/><line x1="621.5" y1="362.93" x2="1334.2" y2="362.93" stroke="#9a9a9a" stroke-width="1" stroke-dasharray="2 1"/><line x1="657.13" y1="320.7" x2="657.13" y2="380" stroke="#9a9a9a" stroke-width="1" stroke-dasharray="2 1"/><line x1="692.77" y1="320.7" x2="692.77" y2="380" stroke="#9a9a9a" stroke-width="1" stroke-dasharray="2 1"/><line x1="728.40" y1="320.7" x2="728.40" y2="380" stroke="#9a9a9a" stroke-width="1" stroke-dasharray="2 1"/><line x1="764.04" y1="320.7" x2="764.04" y2="380" stroke="#9a9a9a" stroke-width="1" stroke-dasharray="2 1"/><line x1="799.67" y1="320.7" x2="799.67" y2="380" stroke="#9a9a9a" stroke-width="1" stroke-dasharray="2 1"/><line x1="835.31" y1="320.7" x2="835.31" y2="380" stroke="#9a9a9a" stroke-width="1" stroke-dasharray="2 1"/><line x1="870.95" y1="320.7" x2="870.95" y2="380" stroke="#9a9a9a" stroke-width="1" stroke-dasharray="2 1"/><line x1="906.58" y1="320.7" x2="906.58" y2="380" stroke="#9a9a9a" stroke-width="1" stroke-dasharray="2 1"/><line x1="942.22" y1="320.7" x2="942.22" y2="380" stroke="#9a9a9a" stroke-width="1" stroke-dasharray="2 1"/><line x1="977.85" y1="320.7" x2="977.85" y2="380" stroke="#9a9a9a" stroke-width="1" stroke-dasharray="2 1"/><line x1="1013.49" y1="320.7" x2="1013.49" y2="380" stroke="#9a9a9a" stroke-width="1" stroke-dasharray="2 1"/><line x1="1049.12" y1="320.7" x2="1049.12" y2="380" stroke="#9a9a9a" stroke-width="1" stroke-dasharray="2 1"/><line x1="1084.76" y1="320.7" x2="1084.76" y2="380" stroke="#9a9a9a" stroke-width="1" stroke-dasharray="2 1"/><line x1="1120.39" y1="320.7" x2="1120.39" y2="380" stroke="#9a9a9a" stroke-width="1" stroke-dasharray="2 1"/><line x1="1156.03" y1="320.7" x2="1156.03" y2="380" stroke="#9a9a9a" stroke-width="1" stroke-dasharray="2 1"/><line x1="1191.66" y1="320.7" x2="1191.66" y2="380" stroke="#9a9a9a" stroke-width="1" stroke-dasharray="2 1"/><line x1="1227.30" y1="320.7" x2="1227.30" y2="380" stroke="#9a9a9a" stroke-width="1" stroke-dasharray="2 1"/><line x1="1262.93" y1="320.7" x2="1262.93" y2="380" stroke="#9a9a9a" stroke-width="1" stroke-dasharray="2 1"/><line x1="1298.57" y1="320.7" x2="1298.57" y2="380" stroke="#9a9a9a" stroke-width="1" stroke-dasharray="2 1"/><line x1="1334.20" y1="320.7" x2="1334.20" y2="380" stroke="#9a9a9a" stroke-width="1" stroke-dasharray="2 1"/><rect x="621.5" y="376.5" width="712.7" height="2" fill="#a8a8a8"/><rect x="621.0" y="320.7" width="1.4" height="57.30000000000001" fill="#14b4b4"/><text x="621.50" y="387.8" font-size="8.8" fill="#e6e6e6" text-anchor="middle">0</text><text x="657.13" y="387.8" font-size="8.8" fill="#e6e6e6" text-anchor="middle">1</text><text x="692.77" y="387.8" font-size="8.8" fill="#e6e6e6" text-anchor="middle">2</text><text x="728.40" y="387.8" font-size="8.8" fill="#e6e6e6" text-anchor="middle">3</text><text x="764.04" y="387.8" font-size="8.8" fill="#e6e6e6" text-anchor="middle">4</text><text x="799.67" y="387.8" font-size="8.8" fill="#e6e6e6" text-anchor="middle">5</text><text x="835.31" y="387.8" font-size="8.8" fill="#e6e6e6" text-anchor="middle">6</text><text x="870.95" y="387.8" font-size="8.8" fill="#e6e6e6" text-anchor="middle">7</text><text x="906.58" y="387.8" font-size="8.8" fill="#e6e6e6" text-anchor="middle">8</text><text x="942.22" y="387.8" font-size="8.8" fill="#e6e6e6" text-anchor="middle">9</text><text x="977.85" y="387.8" font-size="8.8" fill="#e6e6e6" text-anchor="middle">10</text><text x="1013.49" y="387.8" font-size="8.8" fill="#e6e6e6" text-anchor="middle">11</text><text x="1049.12" y="387.8" font-size="8.8" fill="#e6e6e6" text-anchor="middle">12</text><text x="1084.76" y="387.8" font-size="8.8" fill="#e6e6e6" text-anchor="middle">13</text><text x="1120.39" y="387.8" font-size="8.8" fill="#e6e6e6" text-anchor="middle">14</text><text x="1156.03" y="387.8" font-size="8.8" fill="#e6e6e6" text-anchor="middle">15</text><text x="1191.66" y="387.8" font-size="8.8" fill="#e6e6e6" text-anchor="middle">16</text><text x="1227.30" y="387.8" font-size="8.8" fill="#e6e6e6" text-anchor="middle">17</text><text x="1262.93" y="387.8" font-size="8.8" fill="#e6e6e6" text-anchor="middle">18</text><text x="1298.57" y="387.8" font-size="8.8" fill="#e6e6e6" text-anchor="middle">19</text><text x="1334.20" y="387.8" font-size="8.8" fill="#e6e6e6" text-anchor="middle">20</text><text x="623" y="318.8" font-size="10.5" fill="#eeeeee">Vehicle speed</text><text x="572" y="315.5" font-size="7" fill="#dddddd">(km/h)</text><text x="572" y="322.5" font-size="9.2" fill="#e6e6e6">200</text><text x="572" y="379.5" font-size="9.2" fill="#e6e6e6">0</text><text x="577" y="384.8" font-size="7.5" fill="#dddddd">(sec)</text><text x="1329" y="315.8" font-size="7" fill="#dcdcdc" text-anchor="end">[Engine (CNG)]</text><rect x="571" y="389.5" width="770" height="2" fill="#9a9a9a"/><line x1="621.5" y1="405.70" x2="1334.2" y2="405.70" stroke="#9a9a9a" stroke-width="1" stroke-dasharray="2 1"/><line x1="621.5" y1="419.77" x2="1334.2" y2="419.77" stroke="#9a9a9a" stroke-width="1" stroke-dasharray="2 1"/><line x1="621.5" y1="433.85" x2="1334.2" y2="433.85" stroke="#9a9a9a" stroke-width="1" stroke-dasharray="2 1"/><line x1="621.5" y1="447.93" x2="1334.2" y2="447.93" stroke="#9a9a9a" stroke-width="1" stroke-dasharray="2 1"/><line x1="657.13" y1="405.7" x2="657.13" y2="465" stroke="#9a9a9a" stroke-width="1" stroke-dasharray="2 1"/><line x1="692.77" y1="405.7" x2="692.77" y2="465" stroke="#9a9a9a" stroke-width="1" stroke-dasharray="2 1"/><line x1="728.40" y1="405.7" x2="728.40" y2="465" stroke="#9a9a9a" stroke-width="1" stroke-dasharray="2 1"/><line x1="764.04" y1="405.7" x2="764.04" y2="465" stroke="#9a9a9a" stroke-width="1" stroke-dasharray="2 1"/><line x1="799.67" y1="405.7" x2="799.67" y2="465" stroke="#9a9a9a" stroke-width="1" stroke-dasharray="2 1"/><line x1="835.31" y1="405.7" x2="835.31" y2="465" stroke="#9a9a9a" stroke-width="1" stroke-dasharray="2 1"/><line x1="870.95" y1="405.7" x2="870.95" y2="465" stroke="#9a9a9a" stroke-width="1" stroke-dasharray="2 1"/><line x1="906.58" y1="405.7" x2="906.58" y2="465" stroke="#9a9a9a" stroke-width="1" stroke-dasharray="2 1"/><line x1="942.22" y1="405.7" x2="942.22" y2="465" stroke="#9a9a9a" stroke-width="1" stroke-dasharray="2 1"/><line x1="977.85" y1="405.7" x2="977.85" y2="465" stroke="#9a9a9a" stroke-width="1" stroke-dasharray="2 1"/><line x1="1013.49" y1="405.7" x2="1013.49" y2="465" stroke="#9a9a9a" stroke-width="1" stroke-dasharray="2 1"/><line x1="1049.12" y1="405.7" x2="1049.12" y2="465" stroke="#9a9a9a" stroke-width="1" stroke-dasharray="2 1"/><line x1="1084.76" y1="405.7" x2="1084.76" y2="465" stroke="#9a9a9a" stroke-width="1" stroke-dasharray="2 1"/><line x1="1120.39" y1="405.7" x2="1120.39" y2="465" stroke="#9a9a9a" stroke-width="1" stroke-dasharray="2 1"/><line x1="1156.03" y1="405.7" x2="1156.03" y2="465" stroke="#9a9a9a" stroke-width="1" stroke-dasharray="2 1"/><line x1="1191.66" y1="405.7" x2="1191.66" y2="465" stroke="#9a9a9a" stroke-width="1" stroke-dasharray="2 1"/><line x1="1227.30" y1="405.7" x2="1227.30" y2="465" stroke="#9a9a9a" stroke-width="1" stroke-dasharray="2 1"/><line x1="1262.93" y1="405.7" x2="1262.93" y2="465" stroke="#9a9a9a" stroke-width="1" stroke-dasharray="2 1"/><line x1="1298.57" y1="405.7" x2="1298.57" y2="465" stroke="#9a9a9a" stroke-width="1" stroke-dasharray="2 1"/><line x1="1334.20" y1="405.7" x2="1334.20" y2="465" stroke="#9a9a9a" stroke-width="1" stroke-dasharray="2 1"/><rect x="621.5" y="461.5" width="712.7" height="2" fill="#a8a8a8"/><rect x="621.0" y="405.7" width="1.4" height="57.30000000000001" fill="#14b4b4"/><text x="621.50" y="472.8" font-size="8.8" fill="#e6e6e6" text-anchor="middle">0</text><text x="657.13" y="472.8" font-size="8.8" fill="#e6e6e6" text-anchor="middle">1</text><text x="692.77" y="472.8" font-size="8.8" fill="#e6e6e6" text-anchor="middle">2</text><text x="728.40" y="472.8" font-size="8.8" fill="#e6e6e6" text-anchor="middle">3</text><text x="764.04" y="472.8" font-size="8.8" fill="#e6e6e6" text-anchor="middle">4</text><text x="799.67" y="472.8" font-size="8.8" fill="#e6e6e6" text-anchor="middle">5</text><text x="835.31" y="472.8" font-size="8.8" fill="#e6e6e6" text-anchor="middle">6</text><text x="870.95" y="472.8" font-size="8.8" fill="#e6e6e6" text-anchor="middle">7</text><text x="906.58" y="472.8" font-size="8.8" fill="#e6e6e6" text-anchor="middle">8</text><text x="942.22" y="472.8" font-size="8.8" fill="#e6e6e6" text-anchor="middle">9</text><text x="977.85" y="472.8" font-size="8.8" fill="#e6e6e6" text-anchor="middle">10</text><text x="1013.49" y="472.8" font-size="8.8" fill="#e6e6e6" text-anchor="middle">11</text><text x="1049.12" y="472.8" font-size="8.8" fill="#e6e6e6" text-anchor="middle">12</text><text x="1084.76" y="472.8" font-size="8.8" fill="#e6e6e6" text-anchor="middle">13</text><text x="1120.39" y="472.8" font-size="8.8" fill="#e6e6e6" text-anchor="middle">14</text><text x="1156.03" y="472.8" font-size="8.8" fill="#e6e6e6" text-anchor="middle">15</text><text x="1191.66" y="472.8" font-size="8.8" fill="#e6e6e6" text-anchor="middle">16</text><text x="1227.30" y="472.8" font-size="8.8" fill="#e6e6e6" text-anchor="middle">17</text><text x="1262.93" y="472.8" font-size="8.8" fill="#e6e6e6" text-anchor="middle">18</text><text x="1298.57" y="472.8" font-size="8.8" fill="#e6e6e6" text-anchor="middle">19</text><text x="1334.20" y="472.8" font-size="8.8" fill="#e6e6e6" text-anchor="middle">20</text><text x="623" y="403.8" font-size="10.5" fill="#eeeeee">Coolant temperature</text><text x="572" y="400.5" font-size="7" fill="#dddddd">(°C)</text><text x="572" y="407.5" font-size="9.2" fill="#e6e6e6">200</text><text x="572" y="464.5" font-size="9.2" fill="#e6e6e6">−50</text><text x="577" y="469.8" font-size="7.5" fill="#dddddd">(sec)</text><text x="1329" y="400.8" font-size="7" fill="#dcdcdc" text-anchor="end">[Engine (CNG)]</text><rect x="571" y="474.5" width="770" height="2" fill="#9a9a9a"/><line x1="621.5" y1="490.70" x2="1334.2" y2="490.70" stroke="#9a9a9a" stroke-width="1" stroke-dasharray="2 1"/><line x1="621.5" y1="504.77" x2="1334.2" y2="504.77" stroke="#9a9a9a" stroke-width="1" stroke-dasharray="2 1"/><line x1="621.5" y1="518.85" x2="1334.2" y2="518.85" stroke="#9a9a9a" stroke-width="1" stroke-dasharray="2 1"/><line x1="621.5" y1="532.92" x2="1334.2" y2="532.92" stroke="#9a9a9a" stroke-width="1" stroke-dasharray="2 1"/><line x1="657.13" y1="490.7" x2="657.13" y2="550" stroke="#9a9a9a" stroke-width="1" stroke-dasharray="2 1"/><line x1="692.77" y1="490.7" x2="692.77" y2="550" stroke="#9a9a9a" stroke-width="1" stroke-dasharray="2 1"/><line x1="728.40" y1="490.7" x2="728.40" y2="550" stroke="#9a9a9a" stroke-width="1" stroke-dasharray="2 1"/><line x1="764.04" y1="490.7" x2="764.04" y2="550" stroke="#9a9a9a" stroke-width="1" stroke-dasharray="2 1"/><line x1="799.67" y1="490.7" x2="799.67" y2="550" stroke="#9a9a9a" stroke-width="1" stroke-dasharray="2 1"/><line x1="835.31" y1="490.7" x2="835.31" y2="550" stroke="#9a9a9a" stroke-width="1" stroke-dasharray="2 1"/><line x1="870.95" y1="490.7" x2="870.95" y2="550" stroke="#9a9a9a" stroke-width="1" stroke-dasharray="2 1"/><line x1="906.58" y1="490.7" x2="906.58" y2="550" stroke="#9a9a9a" stroke-width="1" stroke-dasharray="2 1"/><line x1="942.22" y1="490.7" x2="942.22" y2="550" stroke="#9a9a9a" stroke-width="1" stroke-dasharray="2 1"/><line x1="977.85" y1="490.7" x2="977.85" y2="550" stroke="#9a9a9a" stroke-width="1" stroke-dasharray="2 1"/><line x1="1013.49" y1="490.7" x2="1013.49" y2="550" stroke="#9a9a9a" stroke-width="1" stroke-dasharray="2 1"/><line x1="1049.12" y1="490.7" x2="1049.12" y2="550" stroke="#9a9a9a" stroke-width="1" stroke-dasharray="2 1"/><line x1="1084.76" y1="490.7" x2="1084.76" y2="550" stroke="#9a9a9a" stroke-width="1" stroke-dasharray="2 1"/><line x1="1120.39" y1="490.7" x2="1120.39" y2="550" stroke="#9a9a9a" stroke-width="1" stroke-dasharray="2 1"/><line x1="1156.03" y1="490.7" x2="1156.03" y2="550" stroke="#9a9a9a" stroke-width="1" stroke-dasharray="2 1"/><line x1="1191.66" y1="490.7" x2="1191.66" y2="550" stroke="#9a9a9a" stroke-width="1" stroke-dasharray="2 1"/><line x1="1227.30" y1="490.7" x2="1227.30" y2="550" stroke="#9a9a9a" stroke-width="1" stroke-dasharray="2 1"/><line x1="1262.93" y1="490.7" x2="1262.93" y2="550" stroke="#9a9a9a" stroke-width="1" stroke-dasharray="2 1"/><line x1="1298.57" y1="490.7" x2="1298.57" y2="550" stroke="#9a9a9a" stroke-width="1" stroke-dasharray="2 1"/><line x1="1334.20" y1="490.7" x2="1334.20" y2="550" stroke="#9a9a9a" stroke-width="1" stroke-dasharray="2 1"/><rect x="621.5" y="546.5" width="712.7" height="2" fill="#a8a8a8"/><rect x="621.0" y="490.7" width="1.4" height="57.30000000000001" fill="#14b4b4"/><text x="621.50" y="557.8" font-size="8.8" fill="#e6e6e6" text-anchor="middle">0</text><text x="657.13" y="557.8" font-size="8.8" fill="#e6e6e6" text-anchor="middle">1</text><text x="692.77" y="557.8" font-size="8.8" fill="#e6e6e6" text-anchor="middle">2</text><text x="728.40" y="557.8" font-size="8.8" fill="#e6e6e6" text-anchor="middle">3</text><text x="764.04" y="557.8" font-size="8.8" fill="#e6e6e6" text-anchor="middle">4</text><text x="799.67" y="557.8" font-size="8.8" fill="#e6e6e6" text-anchor="middle">5</text><text x="835.31" y="557.8" font-size="8.8" fill="#e6e6e6" text-anchor="middle">6</text><text x="870.95" y="557.8" font-size="8.8" fill="#e6e6e6" text-anchor="middle">7</text><text x="906.58" y="557.8" font-size="8.8" fill="#e6e6e6" text-anchor="middle">8</text><text x="942.22" y="557.8" font-size="8.8" fill="#e6e6e6" text-anchor="middle">9</text><text x="977.85" y="557.8" font-size="8.8" fill="#e6e6e6" text-anchor="middle">10</text><text x="1013.49" y="557.8" font-size="8.8" fill="#e6e6e6" text-anchor="middle">11</text><text x="1049.12" y="557.8" font-size="8.8" fill="#e6e6e6" text-anchor="middle">12</text><text x="1084.76" y="557.8" font-size="8.8" fill="#e6e6e6" text-anchor="middle">13</text><text x="1120.39" y="557.8" font-size="8.8" fill="#e6e6e6" text-anchor="middle">14</text><text x="1156.03" y="557.8" font-size="8.8" fill="#e6e6e6" text-anchor="middle">15</text><text x="1191.66" y="557.8" font-size="8.8" fill="#e6e6e6" text-anchor="middle">16</text><text x="1227.30" y="557.8" font-size="8.8" fill="#e6e6e6" text-anchor="middle">17</text><text x="1262.93" y="557.8" font-size="8.8" fill="#e6e6e6" text-anchor="middle">18</text><text x="1298.57" y="557.8" font-size="8.8" fill="#e6e6e6" text-anchor="middle">19</text><text x="1334.20" y="557.8" font-size="8.8" fill="#e6e6e6" text-anchor="middle">20</text><text x="623" y="488.8" font-size="10.5" fill="#eeeeee">Intake air pressure</text><text x="572" y="485.5" font-size="7" fill="#dddddd">(kPa)</text><text x="572" y="492.5" font-size="9.2" fill="#e6e6e6">255</text><text x="572" y="549.5" font-size="9.2" fill="#e6e6e6">0</text><text x="577" y="554.8" font-size="7.5" fill="#dddddd">(sec)</text><text x="1329" y="485.8" font-size="7" fill="#dcdcdc" text-anchor="end">[Engine (CNG)]</text><rect x="571" y="559.5" width="770" height="2" fill="#9a9a9a"/><line x1="621.5" y1="575.70" x2="1334.2" y2="575.70" stroke="#9a9a9a" stroke-width="1" stroke-dasharray="2 1"/><line x1="621.5" y1="589.78" x2="1334.2" y2="589.78" stroke="#9a9a9a" stroke-width="1" stroke-dasharray="2 1"/><line x1="621.5" y1="603.85" x2="1334.2" y2="603.85" stroke="#9a9a9a" stroke-width="1" stroke-dasharray="2 1"/><line x1="621.5" y1="617.92" x2="1334.2" y2="617.92" stroke="#9a9a9a" stroke-width="1" stroke-dasharray="2 1"/><line x1="657.13" y1="575.7" x2="657.13" y2="635" stroke="#9a9a9a" stroke-width="1" stroke-dasharray="2 1"/><line x1="692.77" y1="575.7" x2="692.77" y2="635" stroke="#9a9a9a" stroke-width="1" stroke-dasharray="2 1"/><line x1="728.40" y1="575.7" x2="728.40" y2="635" stroke="#9a9a9a" stroke-width="1" stroke-dasharray="2 1"/><line x1="764.04" y1="575.7" x2="764.04" y2="635" stroke="#9a9a9a" stroke-width="1" stroke-dasharray="2 1"/><line x1="799.67" y1="575.7" x2="799.67" y2="635" stroke="#9a9a9a" stroke-width="1" stroke-dasharray="2 1"/><line x1="835.31" y1="575.7" x2="835.31" y2="635" stroke="#9a9a9a" stroke-width="1" stroke-dasharray="2 1"/><line x1="870.95" y1="575.7" x2="870.95" y2="635" stroke="#9a9a9a" stroke-width="1" stroke-dasharray="2 1"/><line x1="906.58" y1="575.7" x2="906.58" y2="635" stroke="#9a9a9a" stroke-width="1" stroke-dasharray="2 1"/><line x1="942.22" y1="575.7" x2="942.22" y2="635" stroke="#9a9a9a" stroke-width="1" stroke-dasharray="2 1"/><line x1="977.85" y1="575.7" x2="977.85" y2="635" stroke="#9a9a9a" stroke-width="1" stroke-dasharray="2 1"/><line x1="1013.49" y1="575.7" x2="1013.49" y2="635" stroke="#9a9a9a" stroke-width="1" stroke-dasharray="2 1"/><line x1="1049.12" y1="575.7" x2="1049.12" y2="635" stroke="#9a9a9a" stroke-width="1" stroke-dasharray="2 1"/><line x1="1084.76" y1="575.7" x2="1084.76" y2="635" stroke="#9a9a9a" stroke-width="1" stroke-dasharray="2 1"/><line x1="1120.39" y1="575.7" x2="1120.39" y2="635" stroke="#9a9a9a" stroke-width="1" stroke-dasharray="2 1"/><line x1="1156.03" y1="575.7" x2="1156.03" y2="635" stroke="#9a9a9a" stroke-width="1" stroke-dasharray="2 1"/><line x1="1191.66" y1="575.7" x2="1191.66" y2="635" stroke="#9a9a9a" stroke-width="1" stroke-dasharray="2 1"/><line x1="1227.30" y1="575.7" x2="1227.30" y2="635" stroke="#9a9a9a" stroke-width="1" stroke-dasharray="2 1"/><line x1="1262.93" y1="575.7" x2="1262.93" y2="635" stroke="#9a9a9a" stroke-width="1" stroke-dasharray="2 1"/><line x1="1298.57" y1="575.7" x2="1298.57" y2="635" stroke="#9a9a9a" stroke-width="1" stroke-dasharray="2 1"/><line x1="1334.20" y1="575.7" x2="1334.20" y2="635" stroke="#9a9a9a" stroke-width="1" stroke-dasharray="2 1"/><rect x="621.5" y="631.5" width="712.7" height="2" fill="#a8a8a8"/><rect x="621.0" y="575.7" width="1.4" height="57.299999999999955" fill="#14b4b4"/><text x="621.50" y="642.8" font-size="8.8" fill="#e6e6e6" text-anchor="middle">0</text><text x="657.13" y="642.8" font-size="8.8" fill="#e6e6e6" text-anchor="middle">1</text><text x="692.77" y="642.8" font-size="8.8" fill="#e6e6e6" text-anchor="middle">2</text><text x="728.40" y="642.8" font-size="8.8" fill="#e6e6e6" text-anchor="middle">3</text><text x="764.04" y="642.8" font-size="8.8" fill="#e6e6e6" text-anchor="middle">4</text><text x="799.67" y="642.8" font-size="8.8" fill="#e6e6e6" text-anchor="middle">5</text><text x="835.31" y="642.8" font-size="8.8" fill="#e6e6e6" text-anchor="middle">6</text><text x="870.95" y="642.8" font-size="8.8" fill="#e6e6e6" text-anchor="middle">7</text><text x="906.58" y="642.8" font-size="8.8" fill="#e6e6e6" text-anchor="middle">8</text><text x="942.22" y="642.8" font-size="8.8" fill="#e6e6e6" text-anchor="middle">9</text><text x="977.85" y="642.8" font-size="8.8" fill="#e6e6e6" text-anchor="middle">10</text><text x="1013.49" y="642.8" font-size="8.8" fill="#e6e6e6" text-anchor="middle">11</text><text x="1049.12" y="642.8" font-size="8.8" fill="#e6e6e6" text-anchor="middle">12</text><text x="1084.76" y="642.8" font-size="8.8" fill="#e6e6e6" text-anchor="middle">13</text><text x="1120.39" y="642.8" font-size="8.8" fill="#e6e6e6" text-anchor="middle">14</text><text x="1156.03" y="642.8" font-size="8.8" fill="#e6e6e6" text-anchor="middle">15</text><text x="1191.66" y="642.8" font-size="8.8" fill="#e6e6e6" text-anchor="middle">16</text><text x="1227.30" y="642.8" font-size="8.8" fill="#e6e6e6" text-anchor="middle">17</text><text x="1262.93" y="642.8" font-size="8.8" fill="#e6e6e6" text-anchor="middle">18</text><text x="1298.57" y="642.8" font-size="8.8" fill="#e6e6e6" text-anchor="middle">19</text><text x="1334.20" y="642.8" font-size="8.8" fill="#e6e6e6" text-anchor="middle">20</text><text x="623" y="573.8" font-size="10.5" fill="#eeeeee">Intake air temperature</text><text x="572" y="570.5" font-size="7" fill="#dddddd">(°C)</text><text x="572" y="577.5" font-size="9.2" fill="#e6e6e6">200</text><text x="572" y="634.5" font-size="9.2" fill="#e6e6e6">0</text><text x="577" y="639.8" font-size="7.5" fill="#dddddd">(sec)</text><text x="1329" y="570.8" font-size="7" fill="#dcdcdc" text-anchor="end">[Engine (CNG)]</text></svg>
<div style="position:absolute;left:1341px;top:136px;width:12px;height:466px;box-sizing:border-box;background:#f2f2f6"></div>
<div style="position:absolute;left:1347px;top:147px;width:1.2px;height:77px;box-sizing:border-box;background:#6a6a6a"></div>
<div style="position:absolute;left:571px;top:602px;width:783px;height:15px;box-sizing:border-box;background:#f2f2f6"></div>
<svg style="position:absolute;left:571px;top:603px" width="40" height="14" viewBox="0 0 40 14"><rect x="2" y="1.5" width="2.5" height="11" fill="#000"/><path d="M14 1.5V12.5L4.5 7z" fill="#000"/><path d="M31.5 1.5V12.5L22 7z" fill="#000"/><path d="M44 4V10L39 7z" fill="#888"/></svg>
<svg style="position:absolute;left:610px;top:603px" width="8" height="14" viewBox="0 0 8 14"><path d="M6 4V10L1.5 7z" fill="#aaa"/></svg>
<svg style="position:absolute;left:1310px;top:603px" width="44" height="14" viewBox="0 0 44 14"><path d="M6 4V10L10 7z" fill="#aaa"/><path d="M13 1.5V12.5L23 7z" fill="#000"/><path d="M31 1.5V12.5L40 7z" fill="#000"/><rect x="40" y="1.5" width="2.5" height="11" fill="#000"/></svg>
<div style="position:absolute;left:571px;top:626.5px;width:783px;height:2.5px;box-sizing:border-box;background:#d8d8dc;border-top:1px solid #c4c4c8"></div>
<svg style="position:absolute;left:764px;top:620px" width="10" height="14" viewBox="0 0 10 14"><path d="M1 1H9V9L5 13L1 9z" fill="#1a6fd8" stroke="#0c4fa8" stroke-width="0.8"/></svg>
<div class="t" style="left:572px;top:634.23px;font-size:8px;line-height:8px;color:#111;font-weight:normal;">full</div>
<div class="t" style="left:759.0px;width:20px;text-align:center;top:634.23px;font-size:8px;line-height:8px;color:#111;font-weight:normal;">0</div>
<div class="t" style="left:947.0px;width:20px;text-align:center;top:634.23px;font-size:8px;line-height:8px;color:#111;font-weight:normal;">x2</div>
<div class="t" style="left:1138.0px;width:20px;text-align:center;top:634.23px;font-size:8px;line-height:8px;color:#111;font-weight:normal;">x3</div>
<div class="t" style="left:1329.0px;width:20px;text-align:center;top:634.23px;font-size:8px;line-height:8px;color:#111;font-weight:normal;">x4</div>
<div style="position:absolute;left:342px;top:618.5px;width:79px;height:26px;box-sizing:border-box;background:#f0f0f4;border:1px solid #dcdad2;border-radius:2px"></div>
<svg style="position:absolute;left:362px;top:620px" width="42" height="24" viewBox="0 0 42 24"><g id="mg"><path d="M12 12.5L19.5 19.5" stroke="#000" stroke-width="3.6" stroke-linecap="round"/><path d="M12.5 14L18 19" stroke="#aaa" stroke-width="0.7"/><circle cx="8.2" cy="8.2" r="6" fill="#7ff0f4" stroke="#000" stroke-width="2.1"/></g><use href="#mg" x="7.3"/><use href="#mg" x="14.8"/></svg>
<div style="position:absolute;left:341px;top:653px;width:78px;height:26px;box-sizing:border-box;background:#f0f0f4;border:1px solid #dcdad2;border-radius:2px;"></div>
<div class="t" style="left:321.0px;width:118px;text-align:center;top:660.80px;font-size:10.8px;line-height:10.8px;color:#222;font-weight:normal;">Start</div>
<div style="position:absolute;left:425px;top:653px;width:80px;height:26px;box-sizing:border-box;background:#f0f0f4;border:1px solid #dcdad2;border-radius:2px;"></div>
<div class="t" style="left:405.0px;width:120px;text-align:center;top:660.80px;font-size:10.8px;line-height:10.8px;color:#c4c4c8;font-weight:normal;">Stop</div>
<div style="position:absolute;left:757.5px;top:653.5px;width:84.5px;height:25px;box-sizing:border-box;background:#f0f0f4;border:1px solid #dcdad2;border-radius:2px;"></div>
<div class="t" style="left:737.5px;width:124.5px;text-align:center;top:661.67px;font-size:9px;line-height:9px;color:#c8c8cc;font-weight:normal;">< Timestamp jump</div>
<div style="position:absolute;left:848px;top:653.5px;width:87px;height:25px;box-sizing:border-box;background:#f0f0f4;border:1px solid #dcdad2;border-radius:2px;"></div>
<div class="t" style="left:828.0px;width:127px;text-align:center;top:661.67px;font-size:9px;line-height:9px;color:#c8c8cc;font-weight:normal;">Timestamp jump ></div>
<div style="position:absolute;left:1187px;top:653px;width:80px;height:26px;box-sizing:border-box;background:#f0f0f4;border:1px solid #dcdad2;border-radius:2px;"></div>
<div class="t" style="left:1167.0px;width:120px;text-align:center;top:660.80px;font-size:10.8px;line-height:10.8px;color:#c4c4c8;font-weight:normal;">Set timestamp</div>
<div style="position:absolute;left:1274px;top:653px;width:80px;height:26px;box-sizing:border-box;background:#f0f0f4;border:1px solid #dcdad2;border-radius:2px;"></div>
<div class="t" style="left:1254.0px;width:120px;text-align:center;top:655.13px;font-size:10.8px;line-height:10.8px;color:#c4c4c8;font-weight:normal;">Save partial</div>
<div class="t" style="left:1254.0px;width:120px;text-align:center;top:666.47px;font-size:10.8px;line-height:10.8px;color:#c4c4c8;font-weight:normal;">data</div>
<div style="position:absolute;left:79.5px;top:690px;width:1px;height:33px;box-sizing:border-box;background:#c9c5b8;border-right:1px solid #fbfaf5"></div>
<div style="position:absolute;left:143.5px;top:690px;width:1px;height:33px;box-sizing:border-box;background:#c9c5b8;border-right:1px solid #fbfaf5"></div>
<div style="position:absolute;left:284.5px;top:690px;width:1px;height:33px;box-sizing:border-box;background:#c9c5b8;border-right:1px solid #fbfaf5"></div>
<div style="position:absolute;left:330px;top:690px;width:1px;height:33px;box-sizing:border-box;background:#c9c5b8;border-right:1px solid #fbfaf5"></div>
<div style="position:absolute;left:408px;top:690px;width:1px;height:33px;box-sizing:border-box;background:#c9c5b8;border-right:1px solid #fbfaf5"></div>
<svg style="position:absolute;left:5px;top:697px" width="16" height="19" viewBox="0 0 16 19"><ellipse cx="8" cy="15" rx="7.5" ry="4.5" fill="#5a8a2a"/><ellipse cx="8" cy="14.5" rx="6" ry="3.5" fill="#6f9e38"/><ellipse cx="8" cy="6" rx="4" ry="5" fill="#b46a22"/><ellipse cx="7.3" cy="5" rx="2.2" ry="3" fill="#d08838"/></svg>
<div class="t" style="left:27px;top:703.81px;font-size:10.5px;line-height:10.5px;color:#222;font-weight:normal;">GENERAL</div>
<svg style="position:absolute;left:84px;top:696px" width="24" height="23" viewBox="0 0 24 23"><rect x="1" y="19" width="22" height="3" fill="#1a1a50"/><rect x="10" y="18" width="4" height="3" fill="#f0c020"/><path d="M3 2L21 18M21 2L3 18" stroke="#7a0000" stroke-width="5.5" stroke-linecap="round"/><path d="M3 2L21 18M21 2L3 18" stroke="#ee1c1c" stroke-width="4" stroke-linecap="round"/></svg>
<div class="t" style="left:111px;top:697.60px;font-size:8.5px;line-height:8.5px;color:#222;font-weight:normal;">Remain</div>
<div class="t" style="left:114.5px;top:706.10px;font-size:8.5px;line-height:8.5px;color:#222;font-weight:normal;">1days</div>
<svg style="position:absolute;left:145px;top:697px" width="21" height="20" viewBox="0 0 21 20"><path d="M3 2H18V12H3z" fill="#3a68d0" stroke="#707888" stroke-width="1"/><rect x="4" y="3" width="13" height="8" fill="#4a80e8"/><path d="M0.5 13H20.5L19 18H2z" fill="#c8ccd4" stroke="#707888" stroke-width="1"/><path d="M3 15H18" stroke="#888" stroke-width="0.8"/></svg>
<svg style="position:absolute;left:176px;top:698px" width="17" height="18" viewBox="0 0 17 18"><path d="M16 1L9 7L10.5 8.5L1 17L7 10L5.5 8.5z" fill="#f2d020" stroke="#c8a000" stroke-width="0.5"/></svg>
<svg style="position:absolute;left:228.5px;top:699px" width="17" height="17" viewBox="0 0 17 18"><path d="M16 1L9 7L10.5 8.5L1 17L7 10L5.5 8.5z" fill="#f2d020" stroke="#c8a000" stroke-width="0.5"/></svg>
<div class="t" style="left:204.5px;top:698.42px;font-size:19px;line-height:19px;color:#1836b8;font-weight:bold;">?</div>
<div class="t" style="left:185.5px;top:712.06px;font-size:10.8px;line-height:10.8px;color:#222;font-weight:normal;">Simulation</div>
<svg style="position:absolute;left:251px;top:696px" width="24" height="24" viewBox="0 0 24 24"><rect x="0.5" y="1" width="14.5" height="15" fill="#0a2ed0"/><path d="M15.5 6H20.5L23.5 11V17H15.5z" fill="#1038d8"/><rect x="18" y="8" width="3.5" height="3.5" fill="#c0d8ff"/><rect x="0.5" y="16.5" width="23" height="2.5" fill="#0a1c80"/><circle cx="4.5" cy="20" r="2.6" fill="#111"/><circle cx="19" cy="20" r="2.6" fill="#111"/></svg>
<svg style="position:absolute;left:295px;top:697px" width="13" height="19" viewBox="0 0 13 19"><rect x="4" y="0" width="5" height="2" fill="#111"/><rect x="0.5" y="2" width="12" height="14" fill="#0a0a0a"/><path d="M7.5 4L4 9.5H6.5L5.5 14L9 8H6.5z" fill="#fff"/><rect x="0.5" y="16.5" width="12" height="2" fill="#e8e8e8"/></svg>
<div style="position:absolute;left:321.5px;top:708px;width:4.5px;height:1.2px;box-sizing:border-box;background:#333"></div>
<svg style="position:absolute;left:342px;top:697px" width="17" height="21" viewBox="0 0 17 21"><path d="M2 3Q2 1 4 1H13Q15 1 15 3V18Q15 20 13 20H4Q2 20 2 18z" fill="#dcdcdc" stroke="#9a9a9a" stroke-width="0.8"/><circle cx="8.5" cy="9.5" r="4.5" fill="#c8c8c8" stroke="#a8a8a8" stroke-width="0.6"/><circle cx="8.5" cy="9.5" r="1" fill="#888"/><rect x="2.5" y="16" width="12" height="3.5" fill="#a8a8a8"/></svg>
<div class="t" style="left:364.5px;top:703.63px;font-size:10.6px;line-height:10.6px;color:#222;font-weight:normal;">649.0GB</div>
<div style="position:absolute;left:1146.5px;top:693.5px;width:162px;height:25px;box-sizing:border-box;background:#f4f3ee;border:1px solid #a8a59a"></div>
<div style="position:absolute;left:1148.5px;top:696.0px;width:2.6px;height:2.6px;border-radius:50%;background:#8a8a8a"></div>
<div style="position:absolute;left:1152.5px;top:696.0px;width:2.6px;height:2.6px;border-radius:50%;background:#8a8a8a"></div>
<div style="position:absolute;left:1148.5px;top:699.6px;width:2.6px;height:2.6px;border-radius:50%;background:#8a8a8a"></div>
<div style="position:absolute;left:1152.5px;top:699.6px;width:2.6px;height:2.6px;border-radius:50%;background:#8a8a8a"></div>
<div style="position:absolute;left:1148.5px;top:703.2px;width:2.6px;height:2.6px;border-radius:50%;background:#8a8a8a"></div>
<div style="position:absolute;left:1152.5px;top:703.2px;width:2.6px;height:2.6px;border-radius:50%;background:#8a8a8a"></div>
<div style="position:absolute;left:1148.5px;top:706.8px;width:2.6px;height:2.6px;border-radius:50%;background:#8a8a8a"></div>
<div style="position:absolute;left:1152.5px;top:706.8px;width:2.6px;height:2.6px;border-radius:50%;background:#8a8a8a"></div>
<div style="position:absolute;left:1148.5px;top:710.4px;width:2.6px;height:2.6px;border-radius:50%;background:#8a8a8a"></div>
<div style="position:absolute;left:1152.5px;top:710.4px;width:2.6px;height:2.6px;border-radius:50%;background:#8a8a8a"></div>
<div style="position:absolute;left:1148.5px;top:714.0px;width:2.6px;height:2.6px;border-radius:50%;background:#8a8a8a"></div>
<div style="position:absolute;left:1152.5px;top:714.0px;width:2.6px;height:2.6px;border-radius:50%;background:#8a8a8a"></div>
<div style="position:absolute;left:1157.8px;top:695px;width:22px;height:22px;box-sizing:border-box;background:#f4f4f4;border:2px solid #000"></div>
<div style="position:absolute;left:1182.6px;top:695px;width:22.5px;height:22px;box-sizing:border-box;background:#ecebe6;border:1px solid #6a6a6a;border-top-color:#9a9a9a;border-left-color:#9a9a9a;border-right-color:#5a5a5a;border-bottom-color:#4a4a4a"></div>
<div style="position:absolute;left:1207.3999999999999px;top:695px;width:22.5px;height:22px;box-sizing:border-box;background:#ecebe6;border:1px solid #6a6a6a;border-top-color:#9a9a9a;border-left-color:#9a9a9a;border-right-color:#5a5a5a;border-bottom-color:#4a4a4a"></div>
<div style="position:absolute;left:1232.2px;top:695px;width:22.5px;height:22px;box-sizing:border-box;background:#ecebe6;border:1px solid #6a6a6a;border-top-color:#9a9a9a;border-left-color:#9a9a9a;border-right-color:#5a5a5a;border-bottom-color:#4a4a4a"></div>
<div style="position:absolute;left:1257.0px;top:695px;width:22.5px;height:22px;box-sizing:border-box;background:#ecebe6;border:1px solid #6a6a6a;border-top-color:#9a9a9a;border-left-color:#9a9a9a;border-right-color:#5a5a5a;border-bottom-color:#4a4a4a"></div>
<div style="position:absolute;left:1281.8px;top:695px;width:22.5px;height:22px;box-sizing:border-box;background:#ecebe6;border:1px solid #6a6a6a;border-top-color:#9a9a9a;border-left-color:#9a9a9a;border-right-color:#5a5a5a;border-bottom-color:#4a4a4a"></div>
<svg style="position:absolute;left:1160px;top:697px" width="18" height="18" viewBox="0 0 18 18"><path d="M3 16L1.5 12L12 2L15.5 5.5L5 16z" fill="#000"/><path d="M3.5 13L12 4.5L13.5 6L5 14.5z" fill="#f0e838"/><path d="M12 2L14 0.5L17 3.5L15.5 5.5z" fill="#c02020"/></svg>
<svg style="position:absolute;left:1185px;top:698px" width="18" height="16" viewBox="0 0 18 16"><path d="M2 10L9 3L16 6L9 13z" fill="#f08a8a" stroke="#d87070" stroke-width="0.6"/><path d="M2 10L9 13V14L2 11z" fill="#e0a0a0"/></svg>
<svg style="position:absolute;left:1211px;top:698px" width="16" height="17" viewBox="0 0 16 17"><rect x="1" y="1" width="14" height="15" fill="#3a48c8"/><rect x="3.5" y="1.5" width="9" height="6" fill="#e8ecf8"/><rect x="4" y="10.5" width="8" height="5" fill="#202860"/><rect x="9" y="11.5" width="2" height="3" fill="#ccd"/></svg>
<svg style="position:absolute;left:1234px;top:697px" width="19" height="19" viewBox="0 0 19 19"><path d="M2 2L6 17" stroke="#e8c020" stroke-width="2.5"/><path d="M6 1L8 17" stroke="#2050d0" stroke-width="2.5"/><path d="M10 2L9 17" stroke="#d02020" stroke-width="2.5"/><path d="M14 2L11 17" stroke="#20a040" stroke-width="2.5"/><path d="M17 3L12 17" stroke="#9040c0" stroke-width="2"/></svg>
<svg style="position:absolute;left:1258px;top:697px" width="21" height="19" viewBox="0 0 21 19"><path d="M2 8Q2 2 10 2Q18 2 18 8Q18 12 13 12Q10 12 10 14Q10 16 6 15Q2 13 2 8z" fill="#f2dc9a" stroke="#b09050" stroke-width="0.6"/><circle cx="6" cy="5" r="1.5" fill="#20a020"/><circle cx="10" cy="4" r="1.5" fill="#d02020"/><circle cx="14" cy="5" r="1.5" fill="#2040d0"/><path d="M5 14L17 2" stroke="#c01818" stroke-width="2.5"/><rect x="1" y="14" width="19" height="4" fill="#ee1010"/></svg>
<svg style="position:absolute;left:1284px;top:698px" width="19" height="17" viewBox="0 0 19 17"><path d="M1 3H7L9 5H16V15H1z" fill="#e8d070" stroke="#b09a40" stroke-width="0.7"/><path d="M3 7H18L16 15H1z" fill="#f8e890" stroke="#b09a40" stroke-width="0.7"/></svg>
<svg style="position:absolute;left:0;top:0;mix-blend-mode:multiply;pointer-events:none" width="1366" height="723" viewBox="0 0 1366 723"><line x1="-3222.3" y1="1692.4" x2="241.9" y2="-307.6" stroke="#d0d0d0" stroke-width="1"/><line x1="-3021.8" y1="1689.7" x2="442.4" y2="-310.3" stroke="#d0d0d0" stroke-width="1"/><line x1="-2821.3" y1="1687.0" x2="642.9" y2="-313.0" stroke="#d0d0d0" stroke-width="1"/><line x1="-2620.8" y1="1684.3" x2="843.4" y2="-315.7" stroke="#d0d0d0" stroke-width="1"/><line x1="-2420.3" y1="1681.6" x2="1043.9" y2="-318.4" stroke="#d0d0d0" stroke-width="1"/><line x1="-2219.8" y1="1678.9" x2="1244.4" y2="-321.1" stroke="#d0d0d0" stroke-width="1"/><line x1="-2019.3" y1="1676.2" x2="1444.9" y2="-323.8" stroke="#d0d0d0" stroke-width="1"/><line x1="-1818.8" y1="1673.5" x2="1645.4" y2="-326.5" stroke="#d0d0d0" stroke-width="1"/><line x1="-1618.3" y1="1670.8" x2="1845.9" y2="-329.2" stroke="#d0d0d0" stroke-width="1"/><line x1="-1417.8" y1="1668.1" x2="2046.4" y2="-331.9" stroke="#d0d0d0" stroke-width="1"/><line x1="-1217.3" y1="1665.4" x2="2246.9" y2="-334.6" stroke="#d0d0d0" stroke-width="1"/><line x1="-1016.8" y1="1662.7" x2="2447.4" y2="-337.3" stroke="#d0d0d0" stroke-width="1"/><line x1="-816.3" y1="1660.0" x2="2647.9" y2="-340.0" stroke="#d0d0d0" stroke-width="1"/><line x1="-615.8" y1="1657.3" x2="2848.4" y2="-342.7" stroke="#d0d0d0" stroke-width="1"/><line x1="-415.3" y1="1654.6" x2="3048.9" y2="-345.4" stroke="#d0d0d0" stroke-width="1"/><line x1="-214.8" y1="1651.9" x2="3249.4" y2="-348.1" stroke="#d0d0d0" stroke-width="1"/><line x1="-14.3" y1="1649.2" x2="3449.9" y2="-350.8" stroke="#d0d0d0" stroke-width="1"/><line x1="186.2" y1="1646.5" x2="3650.4" y2="-353.5" stroke="#d0d0d0" stroke-width="1"/><line x1="386.7" y1="1643.8" x2="3850.9" y2="-356.2" stroke="#d0d0d0" stroke-width="1"/><line x1="587.2" y1="1641.1" x2="4051.4" y2="-358.9" stroke="#d0d0d0" stroke-width="1"/><line x1="787.7" y1="1638.4" x2="4251.9" y2="-361.6" stroke="#d0d0d0" stroke-width="1"/><line x1="988.2" y1="1635.7" x2="4452.4" y2="-364.3" stroke="#d0d0d0" stroke-width="1"/><line x1="1188.7" y1="1633.0" x2="4652.9" y2="-367.0" stroke="#d0d0d0" stroke-width="1"/><line x1="1389.2" y1="1630.3" x2="4853.4" y2="-369.7" stroke="#d0d0d0" stroke-width="1"/><g transform="translate(-77.3,-10.3) rotate(-30.0)"><rect x="-101" y="-11.5" width="202" height="23" rx="5" fill="#d8d8d8"/><text x="0" y="6.5" font-family="Liberation Sans, sans-serif" font-weight="bold" font-size="18" text-anchor="middle" textLength="186" lengthAdjust="spacingAndGlyphs" fill="#fafafa">MECAPROGRAMS.COM</text></g><g transform="translate(123.2,-13.0) rotate(-30.0)"><rect x="-101" y="-11.5" width="202" height="23" rx="5" fill="#d8d8d8"/><text x="0" y="6.5" font-family="Liberation Sans, sans-serif" font-weight="bold" font-size="18" text-anchor="middle" textLength="186" lengthAdjust="spacingAndGlyphs" fill="#fafafa">MECAPROGRAMS.COM</text></g><g transform="translate(323.7,-15.7) rotate(-30.0)"><rect x="-101" y="-11.5" width="202" height="23" rx="5" fill="#d8d8d8"/><text x="0" y="6.5" font-family="Liberation Sans, sans-serif" font-weight="bold" font-size="18" text-anchor="middle" textLength="186" lengthAdjust="spacingAndGlyphs" fill="#fafafa">MECAPROGRAMS.COM</text></g><g transform="translate(524.2,-18.4) rotate(-30.0)"><rect x="-101" y="-11.5" width="202" height="23" rx="5" fill="#d8d8d8"/><text x="0" y="6.5" font-family="Liberation Sans, sans-serif" font-weight="bold" font-size="18" text-anchor="middle" textLength="186" lengthAdjust="spacingAndGlyphs" fill="#fafafa">MECAPROGRAMS.COM</text></g><g transform="translate(724.7,-21.1) rotate(-30.0)"><rect x="-101" y="-11.5" width="202" height="23" rx="5" fill="#d8d8d8"/><text x="0" y="6.5" font-family="Liberation Sans, sans-serif" font-weight="bold" font-size="18" text-anchor="middle" textLength="186" lengthAdjust="spacingAndGlyphs" fill="#fafafa">MECAPROGRAMS.COM</text></g><g transform="translate(925.2,-23.8) rotate(-30.0)"><rect x="-101" y="-11.5" width="202" height="23" rx="5" fill="#d8d8d8"/><text x="0" y="6.5" font-family="Liberation Sans, sans-serif" font-weight="bold" font-size="18" text-anchor="middle" textLength="186" lengthAdjust="spacingAndGlyphs" fill="#fafafa">MECAPROGRAMS.COM</text></g><g transform="translate(1125.7,-26.5) rotate(-30.0)"><rect x="-101" y="-11.5" width="202" height="23" rx="5" fill="#d8d8d8"/><text x="0" y="6.5" font-family="Liberation Sans, sans-serif" font-weight="bold" font-size="18" text-anchor="middle" textLength="186" lengthAdjust="spacingAndGlyphs" fill="#fafafa">MECAPROGRAMS.COM</text></g><g transform="translate(1326.2,-29.2) rotate(-30.0)"><rect x="-101" y="-11.5" width="202" height="23" rx="5" fill="#d8d8d8"/><text x="0" y="6.5" font-family="Liberation Sans, sans-serif" font-weight="bold" font-size="18" text-anchor="middle" textLength="186" lengthAdjust="spacingAndGlyphs" fill="#fafafa">MECAPROGRAMS.COM</text></g><g transform="translate(20.6,159.3) rotate(-30.0)"><rect x="-101" y="-11.5" width="202" height="23" rx="5" fill="#d8d8d8"/><text x="0" y="6.5" font-family="Liberation Sans, sans-serif" font-weight="bold" font-size="18" text-anchor="middle" textLength="186" lengthAdjust="spacingAndGlyphs" fill="#fafafa">MECAPROGRAMS.COM</text></g><g transform="translate(221.1,156.6) rotate(-30.0)"><rect x="-101" y="-11.5" width="202" height="23" rx="5" fill="#d8d8d8"/><text x="0" y="6.5" font-family="Liberation Sans, sans-serif" font-weight="bold" font-size="18" text-anchor="middle" textLength="186" lengthAdjust="spacingAndGlyphs" fill="#fafafa">MECAPROGRAMS.COM</text></g><g transform="translate(421.6,153.9) rotate(-30.0)"><rect x="-101" y="-11.5" width="202" height="23" rx="5" fill="#d8d8d8"/><text x="0" y="6.5" font-family="Liberation Sans, sans-serif" font-weight="bold" font-size="18" text-anchor="middle" textLength="186" lengthAdjust="spacingAndGlyphs" fill="#fafafa">MECAPROGRAMS.COM</text></g><g transform="translate(622.1,151.2) rotate(-30.0)"><rect x="-101" y="-11.5" width="202" height="23" rx="5" fill="#d8d8d8"/><text x="0" y="6.5" font-family="Liberation Sans, sans-serif" font-weight="bold" font-size="18" text-anchor="middle" textLength="186" lengthAdjust="spacingAndGlyphs" fill="#fafafa">MECAPROGRAMS.COM</text></g><g transform="translate(822.6,148.5) rotate(-30.0)"><rect x="-101" y="-11.5" width="202" height="23" rx="5" fill="#d8d8d8"/><text x="0" y="6.5" font-family="Liberation Sans, sans-serif" font-weight="bold" font-size="18" text-anchor="middle" textLength="186" lengthAdjust="spacingAndGlyphs" fill="#fafafa">MECAPROGRAMS.COM</text></g><g transform="translate(1023.1,145.8) rotate(-30.0)"><rect x="-101" y="-11.5" width="202" height="23" rx="5" fill="#d8d8d8"/><text x="0" y="6.5" font-family="Liberation Sans, sans-serif" font-weight="bold" font-size="18" text-anchor="middle" textLength="186" lengthAdjust="spacingAndGlyphs" fill="#fafafa">MECAPROGRAMS.COM</text></g><g transform="translate(1223.6,143.1) rotate(-30.0)"><rect x="-101" y="-11.5" width="202" height="23" rx="5" fill="#d8d8d8"/><text x="0" y="6.5" font-family="Liberation Sans, sans-serif" font-weight="bold" font-size="18" text-anchor="middle" textLength="186" lengthAdjust="spacingAndGlyphs" fill="#fafafa">MECAPROGRAMS.COM</text></g><g transform="translate(1424.1,140.4) rotate(-30.0)"><rect x="-101" y="-11.5" width="202" height="23" rx="5" fill="#d8d8d8"/><text x="0" y="6.5" font-family="Liberation Sans, sans-serif" font-weight="bold" font-size="18" text-anchor="middle" textLength="186" lengthAdjust="spacingAndGlyphs" fill="#fafafa">MECAPROGRAMS.COM</text></g><g transform="translate(-82.0,331.6) rotate(-30.0)"><rect x="-101" y="-11.5" width="202" height="23" rx="5" fill="#d8d8d8"/><text x="0" y="6.5" font-family="Liberation Sans, sans-serif" font-weight="bold" font-size="18" text-anchor="middle" textLength="186" lengthAdjust="spacingAndGlyphs" fill="#fafafa">MECAPROGRAMS.COM</text></g><g transform="translate(118.5,328.9) rotate(-30.0)"><rect x="-101" y="-11.5" width="202" height="23" rx="5" fill="#d8d8d8"/><text x="0" y="6.5" font-family="Liberation Sans, sans-serif" font-weight="bold" font-size="18" text-anchor="middle" textLength="186" lengthAdjust="spacingAndGlyphs" fill="#fafafa">MECAPROGRAMS.COM</text></g><g transform="translate(319.0,326.2) rotate(-30.0)"><rect x="-101" y="-11.5" width="202" height="23" rx="5" fill="#d8d8d8"/><text x="0" y="6.5" font-family="Liberation Sans, sans-serif" font-weight="bold" font-size="18" text-anchor="middle" textLength="186" lengthAdjust="spacingAndGlyphs" fill="#fafafa">MECAPROGRAMS.COM</text></g><g transform="translate(519.5,323.5) rotate(-30.0)"><rect x="-101" y="-11.5" width="202" height="23" rx="5" fill="#d8d8d8"/><text x="0" y="6.5" font-family="Liberation Sans, sans-serif" font-weight="bold" font-size="18" text-anchor="middle" textLength="186" lengthAdjust="spacingAndGlyphs" fill="#fafafa">MECAPROGRAMS.COM</text></g><g transform="translate(720.0,320.8) rotate(-30.0)"><rect x="-101" y="-11.5" width="202" height="23" rx="5" fill="#d8d8d8"/><text x="0" y="6.5" font-family="Liberation Sans, sans-serif" font-weight="bold" font-size="18" text-anchor="middle" textLength="186" lengthAdjust="spacingAndGlyphs" fill="#fafafa">MECAPROGRAMS.COM</text></g><g transform="translate(920.5,318.1) rotate(-30.0)"><rect x="-101" y="-11.5" width="202" height="23" rx="5" fill="#d8d8d8"/><text x="0" y="6.5" font-family="Liberation Sans, sans-serif" font-weight="bold" font-size="18" text-anchor="middle" textLength="186" lengthAdjust="spacingAndGlyphs" fill="#fafafa">MECAPROGRAMS.COM</text></g><g transform="translate(1121.0,315.4) rotate(-30.0)"><rect x="-101" y="-11.5" width="202" height="23" rx="5" fill="#d8d8d8"/><text x="0" y="6.5" font-family="Liberation Sans, sans-serif" font-weight="bold" font-size="18" text-anchor="middle" textLength="186" lengthAdjust="spacingAndGlyphs" fill="#fafafa">MECAPROGRAMS.COM</text></g><g transform="translate(1321.5,312.7) rotate(-30.0)"><rect x="-101" y="-11.5" width="202" height="23" rx="5" fill="#d8d8d8"/><text x="0" y="6.5" font-family="Liberation Sans, sans-serif" font-weight="bold" font-size="18" text-anchor="middle" textLength="186" lengthAdjust="spacingAndGlyphs" fill="#fafafa">MECAPROGRAMS.COM</text></g><g transform="translate(15.9,501.2) rotate(-30.0)"><rect x="-101" y="-11.5" width="202" height="23" rx="5" fill="#d8d8d8"/><text x="0" y="6.5" font-family="Liberation Sans, sans-serif" font-weight="bold" font-size="18" text-anchor="middle" textLength="186" lengthAdjust="spacingAndGlyphs" fill="#fafafa">MECAPROGRAMS.COM</text></g><g transform="translate(216.4,498.5) rotate(-30.0)"><rect x="-101" y="-11.5" width="202" height="23" rx="5" fill="#d8d8d8"/><text x="0" y="6.5" font-family="Liberation Sans, sans-serif" font-weight="bold" font-size="18" text-anchor="middle" textLength="186" lengthAdjust="spacingAndGlyphs" fill="#fafafa">MECAPROGRAMS.COM</text></g><g transform="translate(416.9,495.8) rotate(-30.0)"><rect x="-101" y="-11.5" width="202" height="23" rx="5" fill="#d8d8d8"/><text x="0" y="6.5" font-family="Liberation Sans, sans-serif" font-weight="bold" font-size="18" text-anchor="middle" textLength="186" lengthAdjust="spacingAndGlyphs" fill="#fafafa">MECAPROGRAMS.COM</text></g><g transform="translate(617.4,493.1) rotate(-30.0)"><rect x="-101" y="-11.5" width="202" height="23" rx="5" fill="#d8d8d8"/><text x="0" y="6.5" font-family="Liberation Sans, sans-serif" font-weight="bold" font-size="18" text-anchor="middle" textLength="186" lengthAdjust="spacingAndGlyphs" fill="#fafafa">MECAPROGRAMS.COM</text></g><g transform="translate(817.9,490.4) rotate(-30.0)"><rect x="-101" y="-11.5" width="202" height="23" rx="5" fill="#d8d8d8"/><text x="0" y="6.5" font-family="Liberation Sans, sans-serif" font-weight="bold" font-size="18" text-anchor="middle" textLength="186" lengthAdjust="spacingAndGlyphs" fill="#fafafa">MECAPROGRAMS.COM</text></g><g transform="translate(1018.4,487.7) rotate(-30.0)"><rect x="-101" y="-11.5" width="202" height="23" rx="5" fill="#d8d8d8"/><text x="0" y="6.5" font-family="Liberation Sans, sans-serif" font-weight="bold" font-size="18" text-anchor="middle" textLength="186" lengthAdjust="spacingAndGlyphs" fill="#fafafa">MECAPROGRAMS.COM</text></g><g transform="translate(1218.9,485.0) rotate(-30.0)"><rect x="-101" y="-11.5" width="202" height="23" rx="5" fill="#d8d8d8"/><text x="0" y="6.5" font-family="Liberation Sans, sans-serif" font-weight="bold" font-size="18" text-anchor="middle" textLength="186" lengthAdjust="spacingAndGlyphs" fill="#fafafa">MECAPROGRAMS.COM</text></g><g transform="translate(1419.4,482.3) rotate(-30.0)"><rect x="-101" y="-11.5" width="202" height="23" rx="5" fill="#d8d8d8"/><text x="0" y="6.5" font-family="Liberation Sans, sans-serif" font-weight="bold" font-size="18" text-anchor="middle" textLength="186" lengthAdjust="spacingAndGlyphs" fill="#fafafa">MECAPROGRAMS.COM</text></g><g transform="translate(-86.7,673.5) rotate(-30.0)"><rect x="-101" y="-11.5" width="202" height="23" rx="5" fill="#d8d8d8"/><text x="0" y="6.5" font-family="Liberation Sans, sans-serif" font-weight="bold" font-size="18" text-anchor="middle" textLength="186" lengthAdjust="spacingAndGlyphs" fill="#fafafa">MECAPROGRAMS.COM</text></g><g transform="translate(113.8,670.8) rotate(-30.0)"><rect x="-101" y="-11.5" width="202" height="23" rx="5" fill="#d8d8d8"/><text x="0" y="6.5" font-family="Liberation Sans, sans-serif" font-weight="bold" font-size="18" text-anchor="middle" textLength="186" lengthAdjust="spacingAndGlyphs" fill="#fafafa">MECAPROGRAMS.COM</text></g><g transform="translate(314.3,668.1) rotate(-30.0)"><rect x="-101" y="-11.5" width="202" height="23" rx="5" fill="#d8d8d8"/><text x="0" y="6.5" font-family="Liberation Sans, sans-serif" font-weight="bold" font-size="18" text-anchor="middle" textLength="186" lengthAdjust="spacingAndGlyphs" fill="#fafafa">MECAPROGRAMS.COM</text></g><g transform="translate(514.8,665.4) rotate(-30.0)"><rect x="-101" y="-11.5" width="202" height="23" rx="5" fill="#d8d8d8"/><text x="0" y="6.5" font-family="Liberation Sans, sans-serif" font-weight="bold" font-size="18" text-anchor="middle" textLength="186" lengthAdjust="spacingAndGlyphs" fill="#fafafa">MECAPROGRAMS.COM</text></g><g transform="translate(715.3,662.7) rotate(-30.0)"><rect x="-101" y="-11.5" width="202" height="23" rx="5" fill="#d8d8d8"/><text x="0" y="6.5" font-family="Liberation Sans, sans-serif" font-weight="bold" font-size="18" text-anchor="middle" textLength="186" lengthAdjust="spacingAndGlyphs" fill="#fafafa">MECAPROGRAMS.COM</text></g><g transform="translate(915.8,660.0) rotate(-30.0)"><rect x="-101" y="-11.5" width="202" height="23" rx="5" fill="#d8d8d8"/><text x="0" y="6.5" font-family="Liberation Sans, sans-serif" font-weight="bold" font-size="18" text-anchor="middle" textLength="186" lengthAdjust="spacingAndGlyphs" fill="#fafafa">MECAPROGRAMS.COM</text></g><g transform="translate(1116.3,657.3) rotate(-30.0)"><rect x="-101" y="-11.5" width="202" height="23" rx="5" fill="#d8d8d8"/><text x="0" y="6.5" font-family="Liberation Sans, sans-serif" font-weight="bold" font-size="18" text-anchor="middle" textLength="186" lengthAdjust="spacingAndGlyphs" fill="#fafafa">MECAPROGRAMS.COM</text></g><g transform="translate(1316.8,654.6) rotate(-30.0)"><rect x="-101" y="-11.5" width="202" height="23" rx="5" fill="#d8d8d8"/><text x="0" y="6.5" font-family="Liberation Sans, sans-serif" font-weight="bold" font-size="18" text-anchor="middle" textLength="186" lengthAdjust="spacingAndGlyphs" fill="#fafafa">MECAPROGRAMS.COM</text></g><g transform="translate(1517.3,651.9) rotate(-30.0)"><rect x="-101" y="-11.5" width="202" height="23" rx="5" fill="#d8d8d8"/><text x="0" y="6.5" font-family="Liberation Sans, sans-serif" font-weight="bold" font-size="18" text-anchor="middle" textLength="186" lengthAdjust="spacingAndGlyphs" fill="#fafafa">MECAPROGRAMS.COM</text></g><g transform="translate(412.2,837.7) rotate(-30.0)"><rect x="-101" y="-11.5" width="202" height="23" rx="5" fill="#d8d8d8"/><text x="0" y="6.5" font-family="Liberation Sans, sans-serif" font-weight="bold" font-size="18" text-anchor="middle" textLength="186" lengthAdjust="spacingAndGlyphs" fill="#fafafa">MECAPROGRAMS.COM</text></g><g transform="translate(612.7,835.0) rotate(-30.0)"><rect x="-101" y="-11.5" width="202" height="23" rx="5" fill="#d8d8d8"/><text x="0" y="6.5" font-family="Liberation Sans, sans-serif" font-weight="bold" font-size="18" text-anchor="middle" textLength="186" lengthAdjust="spacingAndGlyphs" fill="#fafafa">MECAPROGRAMS.COM</text></g><g transform="translate(813.2,832.3) rotate(-30.0)"><rect x="-101" y="-11.5" width="202" height="23" rx="5" fill="#d8d8d8"/><text x="0" y="6.5" font-family="Liberation Sans, sans-serif" font-weight="bold" font-size="18" text-anchor="middle" textLength="186" lengthAdjust="spacingAndGlyphs" fill="#fafafa">MECAPROGRAMS.COM</text></g><g transform="translate(1013.7,829.6) rotate(-30.0)"><rect x="-101" y="-11.5" width="202" height="23" rx="5" fill="#d8d8d8"/><text x="0" y="6.5" font-family="Liberation Sans, sans-serif" font-weight="bold" font-size="18" text-anchor="middle" textLength="186" lengthAdjust="spacingAndGlyphs" fill="#fafafa">MECAPROGRAMS.COM</text></g><g transform="translate(1214.2,826.9) rotate(-30.0)"><rect x="-101" y="-11.5" width="202" height="23" rx="5" fill="#d8d8d8"/><text x="0" y="6.5" font-family="Liberation Sans, sans-serif" font-weight="bold" font-size="18" text-anchor="middle" textLength="186" lengthAdjust="spacingAndGlyphs" fill="#fafafa">MECAPROGRAMS.COM</text></g><g transform="translate(1414.7,824.2) rotate(-30.0)"><rect x="-101" y="-11.5" width="202" height="23" rx="5" fill="#d8d8d8"/><text x="0" y="6.5" font-family="Liberation Sans, sans-serif" font-weight="bold" font-size="18" text-anchor="middle" textLength="186" lengthAdjust="spacingAndGlyphs" fill="#fafafa">MECAPROGRAMS.COM</text></g></svg>
</body></html>
